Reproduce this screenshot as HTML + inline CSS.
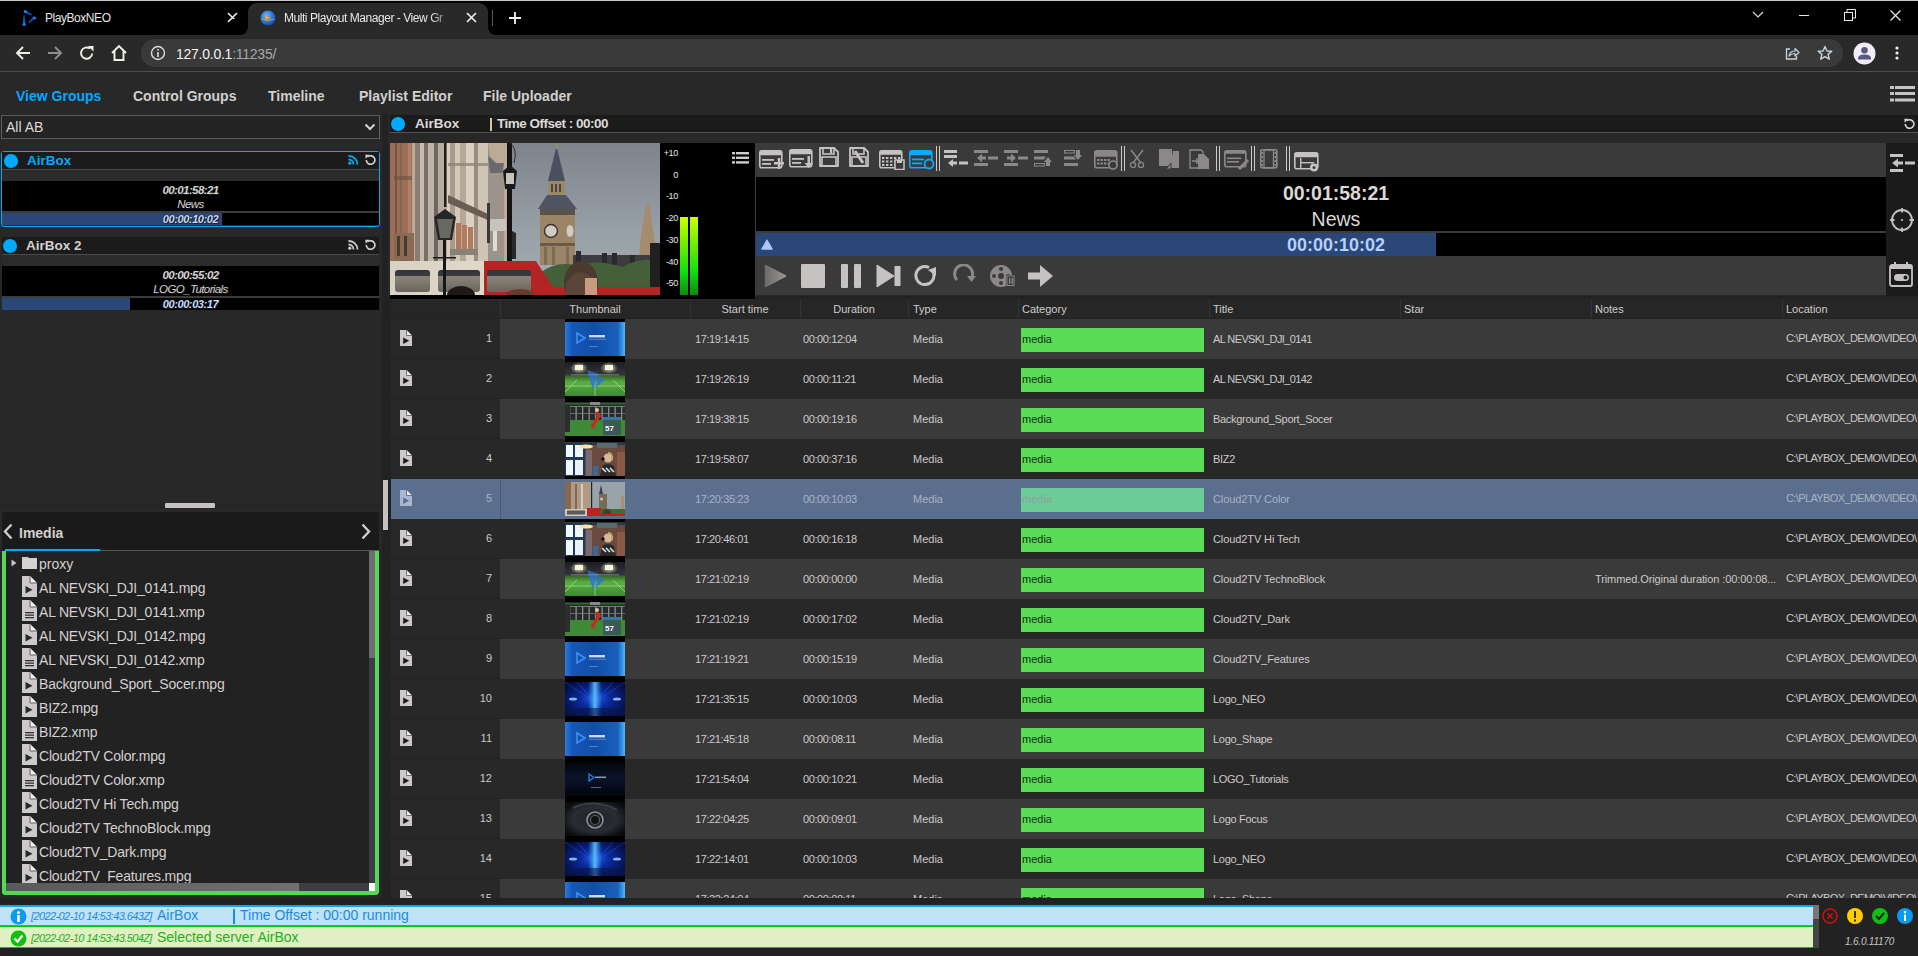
<!DOCTYPE html><html><head><meta charset="utf-8"><style>
html,body{margin:0;padding:0;width:1918px;height:956px;overflow:hidden;background:#282828;font-family:"Liberation Sans",sans-serif;}
div{box-sizing:border-box;}
.t{position:absolute;white-space:nowrap;}
</style></head><body>
<div style="position:absolute;left:0px;top:0px;width:1918px;height:1px;background:#c9c9c9"></div>
<div style="position:absolute;left:0px;top:1px;width:1918px;height:34px;background:#000"></div>
<svg style="position:absolute;left:21px;top:9px;" width="17" height="18" viewBox="0 0 17 18"><path d="M3.2 1.2 L11 5.2 L10.4 6.2 L3.2 3.6 Z" fill="#0e5cd0"/><circle cx="4.4" cy="2.4" r="1.5" fill="#1a80ff"/><path d="M14.4 8.4 L8.2 14.2 L7.4 13.4 L12.6 7.6 Z" fill="#0e5cd0"/><circle cx="13.5" cy="9.1" r="1.5" fill="#1a80ff"/><path d="M1.8 15.5 L2.6 6 L3.4 6 L4.4 15.5 Z" fill="#0e5cd0"/><circle cx="3.1" cy="15.5" r="1.5" fill="#1a80ff"/></svg>
<div style="position:absolute;left:45px;top:11px;white-space:nowrap;font-size:12px;line-height:15px;color:#e6e6e6;letter-spacing:-0.45px">PlayBoxNEO</div>
<svg style="position:absolute;left:227px;top:12px;" width="11" height="11" viewBox="0 0 11 11"><path d="M1 1 L10 10 M10 1 L1 10" stroke="#f0f0f0" stroke-width="1.6"/></svg>
<div style="position:absolute;left:248px;top:3px;width:240px;height:32px;background:#292929;border-radius:9px 9px 0 0"></div>
<div style="position:absolute;left:240px;top:27px;width:8px;height:8px;background:#292929"></div>
<div style="position:absolute;left:232px;top:19px;width:16px;height:16px;background:#000;border-radius:0 0 8px 0"></div>
<div style="position:absolute;left:488px;top:27px;width:8px;height:8px;background:#292929"></div>
<div style="position:absolute;left:488px;top:19px;width:16px;height:16px;background:#000;border-radius:0 0 0 8px"></div>
<svg style="position:absolute;left:260px;top:10px;" width="16" height="16" viewBox="0 0 16 16"><defs><radialGradient id="gb" cx="40%" cy="35%" r="65%"><stop offset="0" stop-color="#6ab8ff"/><stop offset="1" stop-color="#0c4fb8"/></radialGradient></defs><circle cx="8" cy="8" r="7.5" fill="url(#gb)"/><path d="M5 5 L11 8 L5 10 Z" fill="#f0a030"/><path d="M1.5 9 Q8 12 14.5 9" stroke="#f0a030" stroke-width="0.8" fill="none"/></svg>
<div style="position:absolute;left:284px;top:11px;white-space:nowrap;font-size:12px;line-height:15px;color:#e6e6e6;letter-spacing:-0.45px;width:172px;overflow:hidden;-webkit-mask-image:linear-gradient(90deg,#000 85%,transparent)">Multi Playout Manager - View Gr</div>
<svg style="position:absolute;left:466px;top:12px;" width="11" height="11" viewBox="0 0 11 11"><path d="M1 1 L10 10 M10 1 L1 10" stroke="#f0f0f0" stroke-width="1.6"/></svg>
<div style="position:absolute;left:492px;top:10px;width:1px;height:16px;background:#5a5a5a"></div>
<svg style="position:absolute;left:508px;top:11px;" width="14" height="14" viewBox="0 0 14 14"><path d="M7 1 V13 M1 7 H13" stroke="#f4f4f4" stroke-width="1.8"/></svg>
<svg style="position:absolute;left:1752px;top:11px;" width="12" height="8" viewBox="0 0 12 8"><path d="M1 1 L6 6 L11 1" fill="none" stroke="#e0e0e0" stroke-width="1.1"/></svg>
<div style="position:absolute;left:1799px;top:15px;width:10px;height:1px;background:#e8e8e8"></div>
<svg style="position:absolute;left:1844px;top:9px;" width="12" height="12" viewBox="0 0 12 12"><rect x="0.5" y="3.5" width="8" height="8" fill="none" stroke="#e8e8e8" stroke-width="1"/><path d="M3 3.5 V0.5 H11.5 V9 H8.5" fill="none" stroke="#e8e8e8" stroke-width="1"/></svg>
<svg style="position:absolute;left:1890px;top:10px;" width="11" height="11" viewBox="0 0 11 11"><path d="M0.5 0.5 L10.5 10.5 M10.5 0.5 L0.5 10.5" stroke="#ececec" stroke-width="1.2"/></svg>
<div style="position:absolute;left:0px;top:35px;width:1918px;height:36px;background:#292929"></div>
<div style="position:absolute;left:0px;top:71px;width:1918px;height:1px;background:#4e4e4e"></div>
<svg style="position:absolute;left:15px;top:45px;" width="16" height="16" viewBox="0 0 16 16"><path d="M15 8 H2.5 M8 2 L2 8 L8 14" fill="none" stroke="#f2efe6" stroke-width="1.9"/></svg>
<svg style="position:absolute;left:47px;top:45px;" width="16" height="16" viewBox="0 0 16 16"><path d="M1 8 H13.5 M8 2 L14 8 L8 14" fill="none" stroke="#8e8e8e" stroke-width="1.9"/></svg>
<svg style="position:absolute;left:79px;top:45px;" width="16" height="16" viewBox="0 0 16 16"><path d="M13.2 8.5 A5.6 5.6 0 1 1 11 3.6" fill="none" stroke="#f2efe6" stroke-width="1.9"/><path d="M9 1 H14.5 V6.5 Z" fill="#f2efe6"/></svg>
<svg style="position:absolute;left:110px;top:44px;" width="18" height="18" viewBox="0 0 18 18"><path d="M2 9 L9 2 L16 9 M4.5 7 V16 H13.5 V7" fill="none" stroke="#f2efe6" stroke-width="1.9" stroke-linejoin="miter"/></svg>
<div style="position:absolute;left:141px;top:39px;width:1702px;height:28px;background:#3a3a3a;border-radius:14px"></div>
<svg style="position:absolute;left:150px;top:45px;" width="16" height="16" viewBox="0 0 16 16"><circle cx="8" cy="8" r="6.5" fill="none" stroke="#d7dde4" stroke-width="1.4"/><rect x="7.2" y="7" width="1.6" height="5" fill="#d7dde4"/><rect x="7.2" y="4" width="1.6" height="1.6" fill="#d7dde4"/></svg>
<div style="position:absolute;left:176px;top:46px;white-space:nowrap;font-size:14px;line-height:16px;letter-spacing:-0.25px"><span style="color:#f2f2f2">127.0.0.1</span><span style="color:#a8a8a8">:11235/</span></div>
<svg style="position:absolute;left:1784px;top:45px;" width="16" height="16" viewBox="0 0 16 16"><path d="M6 4 H2.5 V14 H12.5 V11" fill="none" stroke="#c8d4dc" stroke-width="1.3"/><path d="M5 11 Q6 6 11 6 V3.5 L15 7.5 L11 11 V8.5 Q7.5 8.5 5 11 Z" fill="none" stroke="#c8d4dc" stroke-width="1.2" stroke-linejoin="round"/></svg>
<svg style="position:absolute;left:1817px;top:45px;" width="16" height="16" viewBox="0 0 16 16"><path d="M8 1.5 L10 6 L14.8 6.3 L11.1 9.4 L12.3 14.2 L8 11.6 L3.7 14.2 L4.9 9.4 L1.2 6.3 L6 6 Z" fill="none" stroke="#c8d4dc" stroke-width="1.4" stroke-linejoin="round"/></svg>
<svg style="position:absolute;left:1853px;top:42px;" width="23" height="23" viewBox="0 0 23 23"><circle cx="11.5" cy="11.5" r="11" fill="#f3ecf8"/><circle cx="11.5" cy="8.3" r="3.3" fill="#545a80"/><path d="M5 16.5 Q5 12.5 11.5 12.5 Q18 12.5 18 16.5 V17.5 H5 Z" fill="#545a80"/></svg>
<svg style="position:absolute;left:1894px;top:45px;" width="6" height="16" viewBox="0 0 6 16"><circle cx="3" cy="3" r="1.6" fill="#f0f0f0"/><circle cx="3" cy="8" r="1.6" fill="#f0f0f0"/><circle cx="3" cy="13" r="1.6" fill="#f0f0f0"/></svg>
<div style="position:absolute;left:16px;top:88px;white-space:nowrap;font-size:14px;line-height:17px;font-weight:bold;color:#00aaff">View Groups</div>
<div style="position:absolute;left:133px;top:88px;white-space:nowrap;font-size:14px;line-height:17px;font-weight:bold;color:#d2cfcf">Control Groups</div>
<div style="position:absolute;left:268px;top:88px;white-space:nowrap;font-size:14px;line-height:17px;font-weight:bold;color:#d2cfcf">Timeline</div>
<div style="position:absolute;left:359px;top:88px;white-space:nowrap;font-size:14px;line-height:17px;font-weight:bold;color:#d2cfcf">Playlist Editor</div>
<div style="position:absolute;left:483px;top:88px;white-space:nowrap;font-size:14px;line-height:17px;font-weight:bold;color:#d2cfcf">File Uploader</div>
<svg style="position:absolute;left:1890px;top:86px;" width="26" height="17" viewBox="0 0 26 17"><rect x="0" y="0" width="4" height="3" fill="#c8c4c4"/><rect x="5" y="0" width="20" height="3" fill="#c8c4c4"/><rect x="0" y="6" width="4" height="3" fill="#c8c4c4"/><rect x="5" y="6" width="20" height="3" fill="#c8c4c4"/><rect x="0" y="12.5" width="4" height="3" fill="#c8c4c4"/><rect x="5" y="12.5" width="20" height="3" fill="#c8c4c4"/></svg>
<div style="position:absolute;left:1px;top:115px;width:379px;height:24px;border:1px solid #5c5c5c;background:#242424"></div>
<div style="position:absolute;left:6px;top:119px;white-space:nowrap;font-size:14px;line-height:17px;color:#dcd8d8">All AB</div>
<svg style="position:absolute;left:364px;top:123px;" width="12" height="8" viewBox="0 0 12 8"><path d="M1.5 1.5 L6 6 L10.5 1.5" fill="none" stroke="#d8d4d4" stroke-width="2"/></svg>
<div style="position:absolute;left:1px;top:151px;width:379px;height:76px;border:1px solid #0aa8f0;border-radius:3px;background:#2a2a2a"></div>
<div style="position:absolute;left:2px;top:152px;width:377px;height:17px;background:#1b1b1b"></div>
<div style="position:absolute;left:2px;top:169px;width:377px;height:1px;background:#4a4a4a"></div>
<div style="position:absolute;left:2px;top:170px;width:377px;height:11px;background:#2b2b2b"></div>
<div style="position:absolute;left:2px;top:181px;width:377px;height:1px;background:#3a3a3a"></div>
<div style="position:absolute;left:2px;top:181px;width:377px;height:30px;background:#000"></div>
<div style="position:absolute;left:2px;top:211px;width:377px;height:2px;background:#3c3c3c"></div>
<div style="position:absolute;left:2px;top:213px;width:377px;height:12px;background:#000"></div>
<div style="position:absolute;left:2px;top:213px;width:220px;height:12px;background:#2a4778"></div>
<div style="position:absolute;left:4px;top:154px;width:14px;height:14px;border-radius:50%;background:#00aaff"></div>
<div style="position:absolute;left:27px;top:153px;white-space:nowrap;font-size:13.5px;line-height:16px;font-weight:bold;color:#00aaff">AirBox</div>
<svg style="position:absolute;left:348px;top:155px;" width="11" height="10" viewBox="0 0 11 10"><circle cx="1.8" cy="8.2" r="1.6" fill="#0aa8f0"/><path d="M0.5 4.5 A5 5 0 0 1 5.5 9.5" fill="none" stroke="#0aa8f0" stroke-width="1.8"/><path d="M0.5 1 A8.5 8.5 0 0 1 9.5 9.5" fill="none" stroke="#0aa8f0" stroke-width="1.8"/></svg>
<svg style="position:absolute;left:365px;top:154px;" width="11" height="11" viewBox="0 0 11 11"><path d="M3 2.6 A4.3 4.3 0 1 1 1.3 6" fill="none" stroke="#d8d4d4" stroke-width="1.6"/><path d="M0.3 0.8 L4.6 0.8 L0.8 4.8 Z" fill="#d8d4d4"/></svg>
<div class="t" style="left:2px;width:377px;text-align:center;top:183px;font-size:11.5px;line-height:14px;font-weight:bold;font-style:italic;color:#d6d2d2;letter-spacing:-0.6px;text-shadow:0 0 1px #000,1px 1px 1px #222">00:01:58:21</div>
<div class="t" style="left:2px;width:377px;text-align:center;top:197px;font-size:11.5px;line-height:14px;font-style:italic;color:#d6d2d2;letter-spacing:-0.6px;text-shadow:0 0 1px #000,1px 1px 1px #222">News</div>
<div class="t" style="left:2px;width:377px;text-align:center;top:212px;font-size:11px;line-height:14px;font-weight:bold;font-style:italic;color:#c8dcff;letter-spacing:-0.4px;text-shadow:0 0 1px #000,1px 1px 1px #222">00:00:10:02</div>
<div style="position:absolute;left:1px;top:236px;width:379px;height:1px;background:#262626"></div>
<div style="position:absolute;left:2px;top:237px;width:377px;height:17px;background:#1b1b1b"></div>
<div style="position:absolute;left:2px;top:254px;width:377px;height:1px;background:#4a4a4a"></div>
<div style="position:absolute;left:2px;top:255px;width:377px;height:11px;background:#2b2b2b"></div>
<div style="position:absolute;left:2px;top:266px;width:377px;height:1px;background:#3a3a3a"></div>
<div style="position:absolute;left:2px;top:266px;width:377px;height:30px;background:#000"></div>
<div style="position:absolute;left:2px;top:296px;width:377px;height:2px;background:#3c3c3c"></div>
<div style="position:absolute;left:2px;top:298px;width:377px;height:12px;background:#000"></div>
<div style="position:absolute;left:2px;top:298px;width:128px;height:12px;background:#2a4778"></div>
<div style="position:absolute;left:3px;top:239px;width:14px;height:14px;border-radius:50%;background:#00aaff"></div>
<div style="position:absolute;left:26px;top:238px;white-space:nowrap;font-size:13.5px;line-height:16px;font-weight:bold;color:#d4d0d0">AirBox 2</div>
<svg style="position:absolute;left:348px;top:240px;" width="11" height="10" viewBox="0 0 11 10"><circle cx="1.8" cy="8.2" r="1.6" fill="#cfcaca"/><path d="M0.5 4.5 A5 5 0 0 1 5.5 9.5" fill="none" stroke="#cfcaca" stroke-width="1.8"/><path d="M0.5 1 A8.5 8.5 0 0 1 9.5 9.5" fill="none" stroke="#cfcaca" stroke-width="1.8"/></svg>
<svg style="position:absolute;left:365px;top:239px;" width="11" height="11" viewBox="0 0 11 11"><path d="M3 2.6 A4.3 4.3 0 1 1 1.3 6" fill="none" stroke="#d8d4d4" stroke-width="1.6"/><path d="M0.3 0.8 L4.6 0.8 L0.8 4.8 Z" fill="#d8d4d4"/></svg>
<div class="t" style="left:2px;width:377px;text-align:center;top:268px;font-size:11.5px;line-height:14px;font-weight:bold;font-style:italic;color:#d6d2d2;letter-spacing:-0.6px;text-shadow:0 0 1px #000,1px 1px 1px #222">00:00:55:02</div>
<div class="t" style="left:2px;width:377px;text-align:center;top:282px;font-size:11.5px;line-height:14px;font-style:italic;color:#d6d2d2;letter-spacing:-0.6px;text-shadow:0 0 1px #000,1px 1px 1px #222">LOGO_Tutorials</div>
<div class="t" style="left:2px;width:377px;text-align:center;top:297px;font-size:11px;line-height:14px;font-weight:bold;font-style:italic;color:#c8dcff;letter-spacing:-0.4px;text-shadow:0 0 1px #000,1px 1px 1px #222">00:00:03:17</div>
<div style="position:absolute;left:0px;top:503px;width:380px;height:6px;background:#252525"></div>
<div style="position:absolute;left:165px;top:503px;width:50px;height:5px;background:#c6c2c2;border-radius:1px"></div>
<div style="position:absolute;left:2px;top:512px;width:377px;height:38px;background:#1a1a1a;border-radius:3px 3px 0 0"></div>
<svg style="position:absolute;left:3px;top:523px;" width="10" height="17" viewBox="0 0 10 17"><path d="M8.5 1.5 L2 8.5 L8.5 15.5" fill="none" stroke="#cfcbcb" stroke-width="2.4"/></svg>
<div style="position:absolute;left:19px;top:525px;white-space:nowrap;font-size:14px;line-height:17px;font-weight:bold;color:#d4d0d0">Imedia</div>
<svg style="position:absolute;left:361px;top:523px;" width="10" height="17" viewBox="0 0 10 17"><path d="M1.5 1.5 L8 8.5 L1.5 15.5" fill="none" stroke="#cfcbcb" stroke-width="2.4"/></svg>
<div style="position:absolute;left:5px;top:550px;width:374px;height:1px;background:#555"></div>
<div style="position:absolute;left:5px;top:549px;width:95px;height:2px;background:#0aa8f0"></div>
<div style="position:absolute;left:2px;top:551px;width:377px;height:344px;background:#222;border:4px solid #55d855;border-top:none;border-radius:0 0 4px 4px"></div>
<div style="position:absolute;left:369px;top:551px;width:6px;height:332px;background:#3d3d45"></div>
<div style="position:absolute;left:369px;top:551px;width:6px;height:107px;background:#6e6e6e"></div>
<div style="position:absolute;left:6px;top:883px;width:363px;height:8px;background:#3d3d45"></div>
<div style="position:absolute;left:6px;top:883px;width:293px;height:8px;background:linear-gradient(90deg,#5a5a5a,#707070)"></div>
<div style="position:absolute;left:369px;top:883px;width:6px;height:8px;background:#fff"></div>
<svg style="position:absolute;left:11px;top:559px;" width="6" height="8" viewBox="0 0 6 8"><path d="M0.5 0.5 L5.5 4 L0.5 7.5 Z" fill="#c8c4c4"/></svg>
<svg style="position:absolute;left:22px;top:556px;" width="16" height="14" viewBox="0 0 16 14"><path d="M0 1 H6 L7 2 H15 V13 H0 Z" fill="#cdc9c9"/><rect x="0" y="3" width="15" height="10" fill="#d6d2d2"/></svg>
<div style="position:absolute;left:39px;top:556px;white-space:nowrap;font-size:14px;line-height:17px;color:#d4d0d0">proxy</div>
<div style="position:absolute;left:6px;top:551px;width:363px;height:332px;overflow:hidden">
<svg style="position:absolute;left:16px;top:25px;" width="15" height="21" viewBox="0 0 15 21"><path d="M0 0 H8 L15 7 V21 H0 Z" fill="#cdc9c9"/><path d="M8 0 V7 H15" fill="#ece9e9" stroke="#555" stroke-width="0.9"/><path d="M3.5 10 L10.5 13.8 L3.5 17.6 Z" fill="#2a2a2a"/></svg>
<div style="position:absolute;left:33px;top:29px;white-space:nowrap;font-size:14px;line-height:17px;color:#d4d0d0;letter-spacing:-0.2px">AL NEVSKI_DJI_0141.mpg</div>
<svg style="position:absolute;left:16px;top:49px;" width="15" height="21" viewBox="0 0 15 21"><path d="M0 0 H8 L15 7 V21 H0 Z" fill="#cdc9c9"/><path d="M8 0 V7 H15" fill="#ece9e9" stroke="#555" stroke-width="0.9"/><rect x="3" y="12" width="9" height="1.3" fill="#333"/><rect x="3" y="14.5" width="9" height="1.3" fill="#333"/><rect x="3" y="17" width="9" height="1.3" fill="#333"/></svg>
<div style="position:absolute;left:33px;top:53px;white-space:nowrap;font-size:14px;line-height:17px;color:#d4d0d0;letter-spacing:-0.2px">AL NEVSKI_DJI_0141.xmp</div>
<svg style="position:absolute;left:16px;top:73px;" width="15" height="21" viewBox="0 0 15 21"><path d="M0 0 H8 L15 7 V21 H0 Z" fill="#cdc9c9"/><path d="M8 0 V7 H15" fill="#ece9e9" stroke="#555" stroke-width="0.9"/><path d="M3.5 10 L10.5 13.8 L3.5 17.6 Z" fill="#2a2a2a"/></svg>
<div style="position:absolute;left:33px;top:77px;white-space:nowrap;font-size:14px;line-height:17px;color:#d4d0d0;letter-spacing:-0.2px">AL NEVSKI_DJI_0142.mpg</div>
<svg style="position:absolute;left:16px;top:97px;" width="15" height="21" viewBox="0 0 15 21"><path d="M0 0 H8 L15 7 V21 H0 Z" fill="#cdc9c9"/><path d="M8 0 V7 H15" fill="#ece9e9" stroke="#555" stroke-width="0.9"/><rect x="3" y="12" width="9" height="1.3" fill="#333"/><rect x="3" y="14.5" width="9" height="1.3" fill="#333"/><rect x="3" y="17" width="9" height="1.3" fill="#333"/></svg>
<div style="position:absolute;left:33px;top:101px;white-space:nowrap;font-size:14px;line-height:17px;color:#d4d0d0;letter-spacing:-0.2px">AL NEVSKI_DJI_0142.xmp</div>
<svg style="position:absolute;left:16px;top:121px;" width="15" height="21" viewBox="0 0 15 21"><path d="M0 0 H8 L15 7 V21 H0 Z" fill="#cdc9c9"/><path d="M8 0 V7 H15" fill="#ece9e9" stroke="#555" stroke-width="0.9"/><path d="M3.5 10 L10.5 13.8 L3.5 17.6 Z" fill="#2a2a2a"/></svg>
<div style="position:absolute;left:33px;top:125px;white-space:nowrap;font-size:14px;line-height:17px;color:#d4d0d0;letter-spacing:-0.2px">Background_Sport_Socer.mpg</div>
<svg style="position:absolute;left:16px;top:145px;" width="15" height="21" viewBox="0 0 15 21"><path d="M0 0 H8 L15 7 V21 H0 Z" fill="#cdc9c9"/><path d="M8 0 V7 H15" fill="#ece9e9" stroke="#555" stroke-width="0.9"/><path d="M3.5 10 L10.5 13.8 L3.5 17.6 Z" fill="#2a2a2a"/></svg>
<div style="position:absolute;left:33px;top:149px;white-space:nowrap;font-size:14px;line-height:17px;color:#d4d0d0;letter-spacing:-0.2px">BIZ2.mpg</div>
<svg style="position:absolute;left:16px;top:169px;" width="15" height="21" viewBox="0 0 15 21"><path d="M0 0 H8 L15 7 V21 H0 Z" fill="#cdc9c9"/><path d="M8 0 V7 H15" fill="#ece9e9" stroke="#555" stroke-width="0.9"/><rect x="3" y="12" width="9" height="1.3" fill="#333"/><rect x="3" y="14.5" width="9" height="1.3" fill="#333"/><rect x="3" y="17" width="9" height="1.3" fill="#333"/></svg>
<div style="position:absolute;left:33px;top:173px;white-space:nowrap;font-size:14px;line-height:17px;color:#d4d0d0;letter-spacing:-0.2px">BIZ2.xmp</div>
<svg style="position:absolute;left:16px;top:193px;" width="15" height="21" viewBox="0 0 15 21"><path d="M0 0 H8 L15 7 V21 H0 Z" fill="#cdc9c9"/><path d="M8 0 V7 H15" fill="#ece9e9" stroke="#555" stroke-width="0.9"/><path d="M3.5 10 L10.5 13.8 L3.5 17.6 Z" fill="#2a2a2a"/></svg>
<div style="position:absolute;left:33px;top:197px;white-space:nowrap;font-size:14px;line-height:17px;color:#d4d0d0;letter-spacing:-0.2px">Cloud2TV Color.mpg</div>
<svg style="position:absolute;left:16px;top:217px;" width="15" height="21" viewBox="0 0 15 21"><path d="M0 0 H8 L15 7 V21 H0 Z" fill="#cdc9c9"/><path d="M8 0 V7 H15" fill="#ece9e9" stroke="#555" stroke-width="0.9"/><rect x="3" y="12" width="9" height="1.3" fill="#333"/><rect x="3" y="14.5" width="9" height="1.3" fill="#333"/><rect x="3" y="17" width="9" height="1.3" fill="#333"/></svg>
<div style="position:absolute;left:33px;top:221px;white-space:nowrap;font-size:14px;line-height:17px;color:#d4d0d0;letter-spacing:-0.2px">Cloud2TV Color.xmp</div>
<svg style="position:absolute;left:16px;top:241px;" width="15" height="21" viewBox="0 0 15 21"><path d="M0 0 H8 L15 7 V21 H0 Z" fill="#cdc9c9"/><path d="M8 0 V7 H15" fill="#ece9e9" stroke="#555" stroke-width="0.9"/><path d="M3.5 10 L10.5 13.8 L3.5 17.6 Z" fill="#2a2a2a"/></svg>
<div style="position:absolute;left:33px;top:245px;white-space:nowrap;font-size:14px;line-height:17px;color:#d4d0d0;letter-spacing:-0.2px">Cloud2TV Hi Tech.mpg</div>
<svg style="position:absolute;left:16px;top:265px;" width="15" height="21" viewBox="0 0 15 21"><path d="M0 0 H8 L15 7 V21 H0 Z" fill="#cdc9c9"/><path d="M8 0 V7 H15" fill="#ece9e9" stroke="#555" stroke-width="0.9"/><path d="M3.5 10 L10.5 13.8 L3.5 17.6 Z" fill="#2a2a2a"/></svg>
<div style="position:absolute;left:33px;top:269px;white-space:nowrap;font-size:14px;line-height:17px;color:#d4d0d0;letter-spacing:-0.2px">Cloud2TV TechnoBlock.mpg</div>
<svg style="position:absolute;left:16px;top:289px;" width="15" height="21" viewBox="0 0 15 21"><path d="M0 0 H8 L15 7 V21 H0 Z" fill="#cdc9c9"/><path d="M8 0 V7 H15" fill="#ece9e9" stroke="#555" stroke-width="0.9"/><path d="M3.5 10 L10.5 13.8 L3.5 17.6 Z" fill="#2a2a2a"/></svg>
<div style="position:absolute;left:33px;top:293px;white-space:nowrap;font-size:14px;line-height:17px;color:#d4d0d0;letter-spacing:-0.2px">Cloud2TV_Dark.mpg</div>
<svg style="position:absolute;left:16px;top:313px;" width="15" height="21" viewBox="0 0 15 21"><path d="M0 0 H8 L15 7 V21 H0 Z" fill="#cdc9c9"/><path d="M8 0 V7 H15" fill="#ece9e9" stroke="#555" stroke-width="0.9"/><path d="M3.5 10 L10.5 13.8 L3.5 17.6 Z" fill="#2a2a2a"/></svg>
<div style="position:absolute;left:33px;top:317px;white-space:nowrap;font-size:14px;line-height:17px;color:#d4d0d0;letter-spacing:-0.2px">Cloud2TV_Features.mpg</div>
</div>
<div style="position:absolute;left:382px;top:113px;width:6px;height:792px;background:#222"></div>
<div style="position:absolute;left:383px;top:480px;width:5px;height:50px;background:#c6c2c2"></div>
<div style="position:absolute;left:390px;top:115px;width:1528px;height:17px;background:#1b1b1b"></div>
<div style="position:absolute;left:390px;top:132px;width:1528px;height:1px;background:#555"></div>
<div style="position:absolute;left:391px;top:117px;width:14px;height:14px;border-radius:50%;background:#00aaff"></div>
<div style="position:absolute;left:415px;top:116px;white-space:nowrap;font-size:13.5px;line-height:16px;font-weight:bold;color:#dcd8d8">AirBox</div>
<div style="position:absolute;left:490px;top:118px;width:2px;height:13px;background:#d8c8a0"></div>
<div style="position:absolute;left:497px;top:116px;white-space:nowrap;font-size:13.5px;line-height:16px;font-weight:bold;color:#dcd8d8;letter-spacing:-0.5px">Time Offset : 00:00</div>
<svg style="position:absolute;left:1904px;top:118px;" width="11" height="11" viewBox="0 0 11 11"><path d="M3 2.6 A4.3 4.3 0 1 1 1.3 6" fill="none" stroke="#d8d4d4" stroke-width="1.6"/><path d="M0.3 0.8 L4.6 0.8 L0.8 4.8 Z" fill="#d8d4d4"/></svg>
<svg style="position:absolute;left:390px;top:143px;" width="270" height="152" viewBox="0 0 270 152">
<defs>
<linearGradient id="sky" x1="0" y1="0" x2="0" y2="1"><stop offset="0" stop-color="#7e848c"/><stop offset="0.6" stop-color="#98a0a8"/><stop offset="1" stop-color="#a8b0b4"/></linearGradient>
<linearGradient id="bus" x1="0" y1="0" x2="1" y2="0"><stop offset="0" stop-color="#d8d2c4"/><stop offset="1" stop-color="#e0d8c8"/></linearGradient>
<linearGradient id="win" x1="0" y1="0" x2="0" y2="1"><stop offset="0" stop-color="#303438"/><stop offset="0.25" stop-color="#3a3e42"/><stop offset="0.3" stop-color="#8a8478"/><stop offset="1" stop-color="#6a645c"/></linearGradient>
</defs>
<rect width="270" height="152" fill="url(#sky)"/>
<rect x="0" y="0" width="118" height="120" fill="#bcaa96"/>
<rect x="0" y="0" width="22" height="120" fill="#9a6e58"/>
<rect x="5" y="0" width="2" height="120" fill="#6a4a3a" opacity="0.7"/>
<rect x="10" y="0" width="1.5" height="120" fill="#7a5a48" opacity="0.7"/>
<rect x="18" y="0" width="3" height="120" fill="#b08068"/>
<rect x="4" y="33" width="18" height="4" fill="#6a5040" opacity="0.6"/>
<rect x="4" y="90" width="20" height="28" fill="#8a6a54"/>
<rect x="7" y="93" width="3" height="20" fill="#4a3a30"/><rect x="14" y="93" width="3" height="20" fill="#4a3a30"/>
<rect x="25" y="0" width="5" height="120" fill="#8a7e74"/>
<rect x="30" y="0" width="4" height="120" fill="#c8bcae"/>
<rect x="34" y="0" width="4" height="120" fill="#7a7068"/>
<rect x="38" y="0" width="6" height="120" fill="#c0b4a6"/>
<rect x="44" y="0" width="4" height="120" fill="#6e6660"/>
<rect x="48" y="0" width="6" height="120" fill="#b8aca0"/>
<rect x="54" y="0" width="2.5" height="64" fill="#1e1e1e"/>
<rect x="57" y="0" width="3" height="120" fill="#d8cebe"/>
<rect x="60" y="0" width="5" height="120" fill="#a89a8c"/>
<rect x="65" y="0" width="5" height="120" fill="#d4c8b8"/>
<rect x="70" y="0" width="6" height="120" fill="#b4a898"/>
<rect x="76" y="0" width="8" height="120" fill="#dcd0c0"/>
<rect x="84" y="0" width="4" height="120" fill="#9a8e82"/>
<rect x="88" y="0" width="10" height="120" fill="#d0c4b4"/>
<path d="M58 52 L100 72 L100 78 L58 60 Z" fill="#6a5e54"/>
<rect x="58" y="20" width="42" height="3" fill="#8a7e72" opacity="0.7"/>
<rect x="66" y="80" width="5" height="26" fill="#b07a5c"/><rect x="72" y="82" width="5" height="24" fill="#b47c5e"/><rect x="78" y="84" width="5" height="22" fill="#b07a5c"/>
<rect x="60" y="106" width="28" height="6" fill="#8a8078"/>
<path d="M98 0 L100 13 L106 20 L114 20 L114 120 L98 120 Z" fill="#9c948c"/>
<path d="M98 13 L106 20 L114 20 L112 30 L100 30 Z" fill="#6a6a6e"/>
<rect x="100" y="76" width="16" height="12" fill="#c8c4bc"/>
<rect x="103" y="88" width="4" height="20" fill="#e0dcd4"/>
<rect x="97" y="60" width="3" height="40" fill="#3a3a3a"/>
<rect x="117" y="0" width="5" height="120" fill="#141414"/>
<path d="M113 28 L120 22 L127 28 L125 46 H115 Z" fill="#1a1a1a"/>
<rect x="116" y="30" width="8" height="11" fill="#c8c4bc"/>
<path d="M120 0 Q128 6 124 20" stroke="#2a2a2a" stroke-width="1" fill="none"/>
<path d="M122 88 L126 90 L126 116 L122 116 Z" fill="#2a2a2a"/>
<path d="M166.5 3 L175 38 H158 Z" fill="#4a5060"/>
<rect x="166" y="0" width="1" height="6" fill="#a89060"/>
<rect x="158" y="38" width="17" height="14" fill="#9a8a64"/>
<rect x="161" y="41" width="2" height="8" fill="#4a4440"/><rect x="165" y="41" width="2" height="8" fill="#4a4440"/><rect x="169" y="41" width="2" height="8" fill="#4a4440"/>
<path d="M157 52 H176 L187 66 H148 Z" fill="#4e5462"/>
<rect x="150" y="66" width="35" height="56" fill="#9c8466"/>
<rect x="150" y="66" width="35" height="6" fill="#5a5248"/>
<rect x="150" y="100" width="35" height="3" fill="#6a5a48"/>
<rect x="154" y="104" width="3" height="18" fill="#6a5a48" opacity="0.6"/><rect x="162" y="104" width="3" height="18" fill="#6a5a48" opacity="0.6"/><rect x="176" y="104" width="3" height="18" fill="#6a5a48" opacity="0.6"/>
<circle cx="161" cy="88" r="6.5" fill="#d0ccc4" stroke="#3a3028" stroke-width="1.4"/>
<ellipse cx="180" cy="88" rx="3.5" ry="6" fill="#d0ccc4"/>
<path d="M256 60 L259 60 L265 100 L266 122 H249 L250 100 Z" fill="#a48c6c"/>
<rect x="183" y="112" width="87" height="12" fill="#3c3c40"/>
<rect x="186" y="108" width="5" height="12" fill="#2a2a2e"/><rect x="212" y="110" width="5" height="12" fill="#2a2a2e"/><rect x="222" y="110" width="5" height="12" fill="#2a2a2e"/><rect x="240" y="112" width="5" height="10" fill="#2a2a2e"/>
<path d="M150 130 Q165 118 185 122 Q210 116 232 124 Q255 112 270 120 V152 H150 Z" fill="#44603a"/>
<rect x="260" y="100" width="10" height="52" fill="#202020"/>
<rect x="0" y="118" width="94" height="34" fill="url(#bus)"/>
<rect x="5" y="127" width="35" height="22" rx="3" fill="url(#win)"/>
<rect x="48" y="127" width="42" height="22" rx="3" fill="url(#win)"/>
<path d="M94 118 H146 L168 152 H94 Z" fill="#b42424"/>
<rect x="97" y="127" width="44" height="22" rx="2" fill="url(#win)"/>
<rect x="150" y="144" width="120" height="8" fill="#b42424"/>
<rect x="53" y="83" width="3" height="69" fill="#161616"/>
<rect x="43" y="114" width="23" height="1.5" fill="#1a1a1a"/>
<path d="M44 74 L55 66 L66 74 L62 97 H48 Z" fill="#262628"/>
<path d="M47 76 H63 L60 95 H50 Z" fill="#6a6660"/>
<ellipse cx="71" cy="152" rx="14" ry="9" fill="#1e1816"/>
<ellipse cx="130" cy="152" rx="14" ry="6" fill="#6a3a2a"/>
<ellipse cx="191" cy="140" rx="17" ry="22" fill="#4a3a30"/>
<path d="M176 140 Q191 118 206 140 L206 152 H176 Z" fill="#5a4638"/>
<rect x="195" y="135" width="12" height="17" fill="#c89a80"/>
</svg>
<div style="position:absolute;left:660px;top:143px;width:95px;height:155px;background:#000"></div>
<div class="t" style="left:640px;width:38px;text-align:right;top:148.0px;font-size:9px;line-height:11px;color:#e6e6e6;letter-spacing:-0.3px">+10</div>
<div class="t" style="left:640px;width:38px;text-align:right;top:169.7px;font-size:9px;line-height:11px;color:#e6e6e6;letter-spacing:-0.3px">0</div>
<div class="t" style="left:640px;width:38px;text-align:right;top:191.4px;font-size:9px;line-height:11px;color:#e6e6e6;letter-spacing:-0.3px">-10</div>
<div class="t" style="left:640px;width:38px;text-align:right;top:213.1px;font-size:9px;line-height:11px;color:#e6e6e6;letter-spacing:-0.3px">-20</div>
<div class="t" style="left:640px;width:38px;text-align:right;top:234.8px;font-size:9px;line-height:11px;color:#e6e6e6;letter-spacing:-0.3px">-30</div>
<div class="t" style="left:640px;width:38px;text-align:right;top:256.5px;font-size:9px;line-height:11px;color:#e6e6e6;letter-spacing:-0.3px">-40</div>
<div class="t" style="left:640px;width:38px;text-align:right;top:278.2px;font-size:9px;line-height:11px;color:#e6e6e6;letter-spacing:-0.3px">-50</div>
<div style="position:absolute;left:680px;top:217px;width:8px;height:78px;background:linear-gradient(180deg,#ccff00 0%,#7cf000 30%,#10e010 70%,#0a8a10 100%)"></div>
<div style="position:absolute;left:690px;top:217px;width:8px;height:78px;background:linear-gradient(180deg,#ccff00 0%,#7cf000 30%,#10e010 70%,#0a8a10 100%)"></div>
<svg style="position:absolute;left:732px;top:152px;" width="17" height="12" viewBox="0 0 17 12"><rect x="0" y="0" width="3" height="2.4" fill="#d0cccc"/><rect x="4" y="0" width="13" height="2.4" fill="#d0cccc"/><rect x="0" y="4.6" width="3" height="2.4" fill="#d0cccc"/><rect x="4" y="4.6" width="13" height="2.4" fill="#d0cccc"/><rect x="0" y="9.2" width="3" height="2.4" fill="#d0cccc"/><rect x="4" y="9.2" width="13" height="2.4" fill="#d0cccc"/></svg>
<div style="position:absolute;left:755px;top:143px;width:1131px;height:152px;background:#3a3a3a"></div>
<div style="position:absolute;left:756px;top:177px;width:1130px;height:54px;background:#000"></div>
<div style="position:absolute;left:756px;top:231px;width:1130px;height:2px;background:#3c3c3c"></div>
<div style="position:absolute;left:756px;top:233px;width:1130px;height:23px;background:#000"></div>
<div style="position:absolute;left:756px;top:233px;width:680px;height:23px;background:#2a4778"></div>
<div style="position:absolute;left:756px;top:182px;white-space:nowrap;width:1160px;text-align:center;font-size:19.5px;line-height:22px;font-weight:bold;color:#dcd8d4">00:01:58:21</div>
<div style="position:absolute;left:756px;top:208px;white-space:nowrap;width:1160px;text-align:center;font-size:19.5px;line-height:22px;color:#dcd8d4">News</div>
<div style="position:absolute;left:756px;top:235px;white-space:nowrap;width:1160px;text-align:center;font-size:18px;line-height:21px;font-weight:bold;color:#b4d0ff">00:00:10:02</div>
<svg style="position:absolute;left:761px;top:239px;" width="12" height="11" viewBox="0 0 12 11"><path d="M6 0.8 L11.4 10.2 H0.6 Z" fill="#a8c8ff" stroke="#a8c8ff" stroke-width="1" stroke-linejoin="round"/></svg>
<svg style="position:absolute;left:759px;top:150px;" width="25" height="19" viewBox="0 0 25 19"><rect x="0.8" y="0.8" width="22" height="17" rx="2" fill="none" stroke="#c6c2c2" stroke-width="1.6"/><rect x="0.8" y="0.8" width="22" height="4.5" rx="1.5" fill="#c6c2c2"/><rect x="3" y="9" width="12" height="1.8" fill="#c6c2c2"/><rect x="3" y="13" width="9" height="1.8" fill="#c6c2c2"/><rect x="15" y="12" width="10" height="2.5" fill="#c6c2c2"/><rect x="18.8" y="8" width="2.5" height="11" fill="#c6c2c2"/></svg>
<svg style="position:absolute;left:789px;top:149px;" width="25" height="20" viewBox="0 0 25 20"><rect x="0.8" y="0.8" width="22" height="17" rx="2" fill="none" stroke="#c6c2c2" stroke-width="1.6"/><rect x="0.8" y="0.8" width="22" height="4.5" rx="1.5" fill="#c6c2c2"/><rect x="3" y="9" width="12" height="1.8" fill="#c6c2c2"/><rect x="3" y="13" width="9" height="1.8" fill="#c6c2c2"/><rect x="18.5" y="7" width="2.5" height="8" fill="#c6c2c2"/><path d="M15.5 14 H24 L19.75 19 Z" fill="#c6c2c2"/></svg>
<svg style="position:absolute;left:819px;top:147px;" width="20" height="20" viewBox="0 0 20 20"><path d="M1 1 H15 L19 5 V19 H1 Z" fill="none" stroke="#c6c2c2" stroke-width="1.8" stroke-linejoin="round"/><rect x="4" y="1" width="11" height="6" fill="none" stroke="#c6c2c2" stroke-width="1.6"/><rect x="11" y="2" width="2.2" height="4" fill="#c6c2c2"/><rect x="3" y="10" width="14" height="9" fill="none" stroke="#c6c2c2" stroke-width="1.6"/></svg>
<svg style="position:absolute;left:849px;top:147px;" width="20" height="20" viewBox="0 0 20 20"><path d="M1 1 H15 L19 5 V19 H1 Z" fill="none" stroke="#c6c2c2" stroke-width="1.8" stroke-linejoin="round"/><rect x="4" y="1" width="11" height="6" fill="none" stroke="#c6c2c2" stroke-width="1.6"/><rect x="3" y="10" width="14" height="9" fill="none" stroke="#c6c2c2" stroke-width="1.6"/><path d="M6 4 L14 16" stroke="#c6c2c2" stroke-width="3"/></svg>
<svg style="position:absolute;left:879px;top:150px;" width="26" height="20" viewBox="0 0 26 20"><rect x="0.8" y="0.8" width="22" height="17" rx="2" fill="none" stroke="#c6c2c2" stroke-width="1.6"/><rect x="0.8" y="0.8" width="22" height="4" rx="1.5" fill="#c6c2c2"/><rect x="3" y="7.0" width="2.4" height="2" fill="#c6c2c2"/><rect x="3" y="10.5" width="2.4" height="2" fill="#c6c2c2"/><rect x="3" y="14.0" width="2.4" height="2" fill="#c6c2c2"/><rect x="7" y="7.0" width="2.4" height="2" fill="#c6c2c2"/><rect x="7" y="10.5" width="2.4" height="2" fill="#c6c2c2"/><rect x="7" y="14.0" width="2.4" height="2" fill="#c6c2c2"/><rect x="11" y="7.0" width="2.4" height="2" fill="#c6c2c2"/><rect x="11" y="10.5" width="2.4" height="2" fill="#c6c2c2"/><rect x="11" y="14.0" width="2.4" height="2" fill="#c6c2c2"/><rect x="15" y="7.0" width="2.4" height="2" fill="#c6c2c2"/><rect x="15" y="10.5" width="2.4" height="2" fill="#c6c2c2"/><rect x="15" y="14.0" width="2.4" height="2" fill="#c6c2c2"/><rect x="19" y="7.0" width="2.4" height="2" fill="#c6c2c2"/><rect x="19" y="10.5" width="2.4" height="2" fill="#c6c2c2"/><rect x="19" y="14.0" width="2.4" height="2" fill="#c6c2c2"/><rect x="16" y="10" width="9" height="9.5" fill="#3a3a3a" stroke="#c6c2c2" stroke-width="1.5"/><rect x="18" y="10" width="5" height="3" fill="#c6c2c2"/></svg>
<svg style="position:absolute;left:909px;top:150px;" width="26" height="20" viewBox="0 0 26 20"><rect x="0.8" y="0.8" width="22" height="17" rx="2" fill="none" stroke="#0aaaff" stroke-width="1.6"/><rect x="0.8" y="0.8" width="22" height="4.5" rx="1.5" fill="#0aaaff"/><rect x="3" y="8.5" width="12" height="1.8" fill="#0aaaff"/><rect x="3" y="12.5" width="10" height="1.8" fill="#0aaaff"/><circle cx="20" cy="14" r="4.5" fill="#3a3a3a" stroke="#0aaaff" stroke-width="1.8"/></svg>
<div style="position:absolute;left:936px;top:146px;width:4px;height:25px;border-left:1.2px solid #cfcbcb;border-right:1.2px solid #cfcbcb"></div>
<svg style="position:absolute;left:944px;top:150px;" width="25" height="19" viewBox="0 0 25 19"><rect x="0" y="0" width="13" height="3" fill="#c6c2c2"/><rect x="0" y="5" width="13" height="3" fill="#c6c2c2"/><path d="M4 13 L9 9 V11.5 H13 V14.5 H9 V17 Z" fill="#c6c2c2"/><rect x="15" y="11.5" width="9" height="3" fill="#c6c2c2"/></svg>
<svg style="position:absolute;left:974px;top:150px;" width="25" height="18" viewBox="0 0 25 18"><rect x="0" y="0" width="14" height="3" fill="#8c8888"/><rect x="0" y="13" width="14" height="3" fill="#8c8888"/><path d="M3 8 L8 3.5 V6.5 H12 V9.5 H8 V12.5 Z" fill="#8c8888"/><rect x="14" y="6.5" width="10" height="3" fill="#8c8888"/></svg>
<svg style="position:absolute;left:1004px;top:150px;" width="25" height="18" viewBox="0 0 25 18"><rect x="0" y="0" width="14" height="3" fill="#8c8888"/><rect x="0" y="13" width="14" height="3" fill="#8c8888"/><path d="M12 8 L7 3.5 V6.5 H3 V9.5 H7 V12.5 Z" fill="#8c8888"/><rect x="14" y="6.5" width="10" height="3" fill="#8c8888"/></svg>
<svg style="position:absolute;left:1034px;top:150px;" width="19" height="18" viewBox="0 0 19 18"><rect x="0" y="0" width="14" height="3" fill="#8c8888"/><path d="M0 6.5 H12 L10 9.5 H0 Z" fill="#8c8888"/><rect x="0.5" y="13.5" width="10" height="2.5" fill="none" stroke="#8c8888" stroke-width="1"/><path d="M14 7 L18 12 H16 V16 H12 V12 H10 Z" fill="#8c8888"/></svg>
<svg style="position:absolute;left:1064px;top:150px;" width="19" height="18" viewBox="0 0 19 18"><rect x="0.5" y="0.5" width="10" height="2.5" fill="none" stroke="#8c8888" stroke-width="1"/><path d="M0 6.5 H10 L12 9.5 H0 Z" fill="#8c8888"/><rect x="0" y="13" width="14" height="3" fill="#8c8888"/><path d="M12 0 H16 V5 H18 L14 10 L10 5 H12 Z" fill="#8c8888"/></svg>
<svg style="position:absolute;left:1094px;top:150px;" width="26" height="20" viewBox="0 0 26 20"><rect x="0.8" y="0.8" width="22" height="17" rx="2" fill="none" stroke="#8c8888" stroke-width="1.6"/><rect x="0.8" y="0.8" width="22" height="6" rx="1.5" fill="#8c8888"/><rect x="3.0" y="9.0" width="2.4" height="2" fill="#8c8888"/><rect x="3.0" y="12.5" width="2.4" height="2" fill="#8c8888"/><rect x="6.5" y="9.0" width="2.4" height="2" fill="#8c8888"/><rect x="6.5" y="12.5" width="2.4" height="2" fill="#8c8888"/><rect x="10.0" y="9.0" width="2.4" height="2" fill="#8c8888"/><rect x="10.0" y="12.5" width="2.4" height="2" fill="#8c8888"/><rect x="13.5" y="9.0" width="2.4" height="2" fill="#8c8888"/><rect x="13.5" y="12.5" width="2.4" height="2" fill="#8c8888"/><circle cx="19" cy="15" r="4" fill="#3a3a3a" stroke="#8c8888" stroke-width="1.6"/></svg>
<div style="position:absolute;left:1121px;top:146px;width:4px;height:25px;border-left:1.2px solid #cfcbcb;border-right:1.2px solid #cfcbcb"></div>
<svg style="position:absolute;left:1129px;top:149px;" width="17" height="20" viewBox="0 0 17 20"><path d="M2 1 L12 14 M14 1 L4 14" stroke="#8c8888" stroke-width="1.4"/><circle cx="4" cy="16" r="2.6" fill="none" stroke="#8c8888" stroke-width="1.3"/><circle cx="12" cy="16" r="2.6" fill="none" stroke="#8c8888" stroke-width="1.3"/></svg>
<svg style="position:absolute;left:1159px;top:149px;" width="21" height="21" viewBox="0 0 21 21"><rect x="0" y="0" width="13" height="17" fill="#8c8888"/><path d="M14 2 H20 V19 H11 Z" fill="#8c8888"/><path d="M7 20 L12 14 L12 20 Z" fill="#8c8888" stroke="#3a3a3a" stroke-width="1"/></svg>
<svg style="position:absolute;left:1189px;top:149px;" width="21" height="21" viewBox="0 0 21 21"><path d="M1 1 H12 L14 3 V19 H1 Z" fill="none" stroke="#8c8888" stroke-width="1.3"/><path d="M9 5 H15 L20 10 V20 H9 Z" fill="#8c8888"/><path d="M3 12 H9 M7 9.5 L10 12 L7 14.5" stroke="#8c8888" stroke-width="1.4" fill="none"/></svg>
<div style="position:absolute;left:1216px;top:146px;width:4px;height:25px;border-left:1.2px solid #cfcbcb;border-right:1.2px solid #cfcbcb"></div>
<svg style="position:absolute;left:1224px;top:150px;" width="26" height="20" viewBox="0 0 26 20"><rect x="0.8" y="0.8" width="21" height="16" rx="2" fill="none" stroke="#8c8888" stroke-width="1.6"/><rect x="0.8" y="0.8" width="21" height="3" rx="1.5" fill="#8c8888"/><rect x="3" y="7.5" width="14" height="1.6" fill="#8c8888"/><rect x="3" y="11" width="12" height="1.6" fill="#8c8888"/><path d="M15 19 L24 10" stroke="#8c8888" stroke-width="3"/></svg>
<div style="position:absolute;left:1251px;top:146px;width:4px;height:25px;border-left:1.2px solid #cfcbcb;border-right:1.2px solid #cfcbcb"></div>
<svg style="position:absolute;left:1260px;top:149px;" width="18" height="20" viewBox="0 0 18 20"><rect x="0.8" y="0.8" width="16" height="18" rx="1" fill="none" stroke="#8c8888" stroke-width="1.6"/><rect x="4" y="1" width="9.5" height="18" fill="none" stroke="#8c8888" stroke-width="1.3"/><rect x="1.5" y="3" width="1.5" height="2" fill="#8c8888"/><rect x="14.5" y="3" width="1.5" height="2" fill="#8c8888"/><rect x="1.5" y="7" width="1.5" height="2" fill="#8c8888"/><rect x="14.5" y="7" width="1.5" height="2" fill="#8c8888"/><rect x="1.5" y="11" width="1.5" height="2" fill="#8c8888"/><rect x="14.5" y="11" width="1.5" height="2" fill="#8c8888"/><rect x="1.5" y="15" width="1.5" height="2" fill="#8c8888"/><rect x="14.5" y="15" width="1.5" height="2" fill="#8c8888"/></svg>
<div style="position:absolute;left:1286px;top:146px;width:4px;height:25px;border-left:1.2px solid #cfcbcb;border-right:1.2px solid #cfcbcb"></div>
<svg style="position:absolute;left:1294px;top:152px;" width="27" height="21" viewBox="0 0 27 21"><rect x="0.8" y="0.8" width="23" height="16" rx="2" fill="none" stroke="#c6c2c2" stroke-width="1.6"/><rect x="0.8" y="0.8" width="23" height="4.5" rx="1.5" fill="#c6c2c2"/><rect x="6" y="6" width="1.4" height="10" fill="#c6c2c2"/><rect x="6" y="10" width="14" height="1.4" fill="#c6c2c2"/><circle cx="20" cy="15.5" r="4" fill="#c6c2c2"/><circle cx="20" cy="15.5" r="1.5" fill="#3a3a3a"/></svg>
<svg style="position:absolute;left:764px;top:264px;" width="23" height="24" viewBox="0 0 23 24"><defs><linearGradient id="pg" x1="0" y1="0" x2="1" y2="0"><stop offset="0" stop-color="#6e6a6a"/><stop offset="1" stop-color="#9a9696"/></linearGradient></defs><path d="M1.5 1.5 L21.5 12 L1.5 22.5 Z" fill="url(#pg)" stroke="url(#pg)" stroke-width="1.5" stroke-linejoin="round"/></svg>
<div style="position:absolute;left:801px;top:264px;width:24px;height:24px;background:#c6c2c2;border-radius:1px"></div>
<div style="position:absolute;left:841px;top:264px;width:7px;height:24px;background:#c6c2c2;border-radius:1px"></div>
<div style="position:absolute;left:854px;top:264px;width:7px;height:24px;background:#c6c2c2;border-radius:1px"></div>
<svg style="position:absolute;left:876px;top:264px;" width="26" height="24" viewBox="0 0 26 24"><path d="M1 1 L18 12 L1 23 Z" fill="#c6c2c2" stroke="#c6c2c2" stroke-width="1" stroke-linejoin="round"/><rect x="18.5" y="2" width="6" height="20" fill="#c6c2c2"/></svg>
<svg style="position:absolute;left:914px;top:264px;" width="26" height="24" viewBox="0 0 26 24"><path d="M19.5 9 A9 9 0 1 1 15 3.6" fill="none" stroke="#c6c2c2" stroke-width="3"/><path d="M14 6 L22 3 L22 12 Z" fill="#c6c2c2"/></svg>
<svg style="position:absolute;left:952px;top:264px;" width="26" height="24" viewBox="0 0 26 24"><path d="M5 16 A9 9 0 1 1 20 13" fill="none" stroke="#8c8888" stroke-width="3"/><path d="M15 12 H24 L19.5 18 Z" fill="#8c8888"/></svg>
<svg style="position:absolute;left:990px;top:264px;" width="26" height="24" viewBox="0 0 26 24"><circle cx="11" cy="12" r="11" fill="#8c8888"/><circle cx="11" cy="5" r="2" fill="#3a3a3a"/><circle cx="11" cy="19" r="2" fill="#3a3a3a"/><circle cx="4" cy="12" r="2" fill="#3a3a3a"/><circle cx="18" cy="12" r="2" fill="#3a3a3a"/><circle cx="11" cy="12" r="3" fill="#3a3a3a"/><rect x="16" y="11" width="9" height="11" fill="#3a3a3a"/><rect x="17" y="12" width="7" height="9.5" fill="none" stroke="#8c8888" stroke-width="1"/><rect x="19" y="14" width="1.3" height="6" fill="#8c8888"/><rect x="21.5" y="14" width="1.3" height="6" fill="#8c8888"/></svg>
<svg style="position:absolute;left:1028px;top:264px;" width="26" height="24" viewBox="0 0 26 24"><path d="M0 8.5 H12 V1 L25 12 L12 23 V15.5 H0 Z" fill="#c6c2c2"/></svg>
<div style="position:absolute;left:1886px;top:143px;width:32px;height:153px;background:#1b1b1b"></div>
<svg style="position:absolute;left:1890px;top:154px;" width="25" height="19" viewBox="0 0 25 19"><rect x="0" y="0" width="13" height="3" fill="#c6c2c2"/><rect x="0" y="15" width="13" height="3" fill="#c6c2c2"/><path d="M2 9 L8 4.5 V7.5 H13 V10.5 H8 V13.5 Z" fill="#c6c2c2"/><rect x="15" y="7.5" width="10" height="3" fill="#c6c2c2"/></svg>
<svg style="position:absolute;left:1889px;top:207px;" width="26" height="26" viewBox="0 0 26 26"><circle cx="13" cy="13" r="10" fill="none" stroke="#c6c2c2" stroke-width="1.8"/><path d="M13 1 V5.5 M13 20.5 V25 M1 13 H5.5 M20.5 13 H25" stroke="#c6c2c2" stroke-width="1.8"/><circle cx="13" cy="13" r="1.1" fill="#c6c2c2"/></svg>
<svg style="position:absolute;left:1889px;top:262px;" width="25" height="26" viewBox="0 0 25 26"><rect x="1" y="3" width="22" height="21" rx="2" fill="none" stroke="#c6c2c2" stroke-width="1.8"/><rect x="1" y="3" width="22" height="4" fill="#c6c2c2"/><rect x="5" y="0" width="2" height="5" fill="#c6c2c2"/><rect x="17" y="0" width="2" height="5" fill="#c6c2c2"/><rect x="5" y="12" width="15" height="7" rx="3.5" fill="#c6c2c2"/><circle cx="16.5" cy="15.5" r="2" fill="#1b1b1b"/></svg>
<div style="position:absolute;left:388px;top:296px;width:1530px;height:609px;background:#222"></div>
<div style="position:absolute;left:391px;top:299px;width:1527px;height:19px;background:#262626"></div>
<div style="position:absolute;left:390px;top:295px;width:365px;height:4px;background:#000"></div>
<div style="position:absolute;left:500px;top:299px;width:1px;height:19px;background:#333"></div>
<div style="position:absolute;left:690px;top:299px;width:1px;height:19px;background:#333"></div>
<div style="position:absolute;left:800px;top:299px;width:1px;height:19px;background:#333"></div>
<div style="position:absolute;left:908px;top:299px;width:1px;height:19px;background:#333"></div>
<div style="position:absolute;left:1018px;top:299px;width:1px;height:19px;background:#333"></div>
<div style="position:absolute;left:1209px;top:299px;width:1px;height:19px;background:#333"></div>
<div style="position:absolute;left:1400px;top:299px;width:1px;height:19px;background:#333"></div>
<div style="position:absolute;left:1591px;top:299px;width:1px;height:19px;background:#333"></div>
<div style="position:absolute;left:1782px;top:299px;width:1px;height:19px;background:#333"></div>
<div style="position:absolute;left:565px;top:303px;white-space:nowrap;width:60px;text-align:center;font-size:11px;line-height:13px;color:#cfcbcb">Thumbnail</div>
<div style="position:absolute;left:690px;top:303px;white-space:nowrap;width:110px;text-align:center;font-size:11px;line-height:13px;color:#cfcbcb">Start time</div>
<div style="position:absolute;left:800px;top:303px;white-space:nowrap;width:108px;text-align:center;font-size:11px;line-height:13px;color:#cfcbcb">Duration</div>
<div style="position:absolute;left:913px;top:303px;white-space:nowrap;font-size:11px;line-height:13px;color:#cfcbcb">Type</div>
<div style="position:absolute;left:1022px;top:303px;white-space:nowrap;font-size:11px;line-height:13px;color:#cfcbcb">Category</div>
<div style="position:absolute;left:1213px;top:303px;white-space:nowrap;font-size:11px;line-height:13px;color:#cfcbcb">Title</div>
<div style="position:absolute;left:1404px;top:303px;white-space:nowrap;font-size:11px;line-height:13px;color:#cfcbcb">Star</div>
<div style="position:absolute;left:1595px;top:303px;white-space:nowrap;font-size:11px;line-height:13px;color:#cfcbcb">Notes</div>
<div style="position:absolute;left:1786px;top:303px;white-space:nowrap;font-size:11px;line-height:13px;color:#cfcbcb">Location</div>
<div style="position:absolute;left:391px;top:319px;width:1527px;height:579px;overflow:hidden">
<div style="position:absolute;left:0px;top:0px;width:109px;height:40px;background:#282828;border-bottom:1px solid #222"></div>
<div style="position:absolute;left:109px;top:0px;width:1418px;height:40px;background:#3a3a3a"></div>
<svg style="position:absolute;left:9px;top:11px;" width="12" height="16" viewBox="0 0 12 16"><path d="M0 0 H6.5 L12 5.5 V16 H0 Z" fill="#cdc9c9"/><path d="M6.5 0 V5.5 H12" fill="#e8e6e6" stroke="#6a6a6a" stroke-width="0.9"/><path d="M3.2 7.5 L9.2 10.7 L3.2 13.9 Z" fill="#1e1e1e"/></svg>
<div class="t" style="left:49px;width:52px;text-align:right;top:13px;font-size:11px;line-height:13px;color:#cdc9c9">1</div>
<div style="position:absolute;left:174px;top:0px;width:60px;height:40px;background:#000"></div>
<svg style="position:absolute;left:174px;top:3px;" width="60" height="34" viewBox="0 0 60 34"><defs><linearGradient id="ga" x1="0" y1="0" x2="1" y2="0"><stop offset="0" stop-color="#2a7ae0"/><stop offset="0.12" stop-color="#1656b8"/><stop offset="0.5" stop-color="#124ea8"/><stop offset="0.88" stop-color="#1a60c0"/><stop offset="1" stop-color="#50b8ff"/></linearGradient></defs><rect width="60" height="34" fill="url(#ga)"/><path d="M12 11 L20 16 L12 21 Z" fill="none" stroke="#3a90f0" stroke-width="1.6"/><rect x="24" y="13" width="16" height="2.4" fill="#e0eaff" opacity="0.9"/><rect x="24" y="16.8" width="17" height="0.9" fill="#7aa8e0" opacity="0.7"/><rect x="24" y="24" width="9" height="0.8" fill="#7aa8e0" opacity="0.7"/></svg>
<div style="position:absolute;left:304px;top:14px;white-space:nowrap;font-size:11px;line-height:13px;color:#cdc9c9;letter-spacing:-0.4px">17:19:14:15</div>
<div style="position:absolute;left:412px;top:14px;white-space:nowrap;font-size:11px;line-height:13px;color:#cdc9c9;letter-spacing:-0.4px">00:00:12:04</div>
<div style="position:absolute;left:522px;top:14px;white-space:nowrap;font-size:11px;line-height:13px;color:#cdc9c9">Media</div>
<div style="position:absolute;left:630px;top:9px;width:183px;height:24px;background:#58dd55"></div>
<div style="position:absolute;left:631px;top:14px;white-space:nowrap;font-size:11px;line-height:13px;color:#1a2a1a">media</div>
<div style="position:absolute;left:822px;top:14px;white-space:nowrap;font-size:11px;line-height:13px;color:#cdc9c9;letter-spacing:-0.6px">AL NEVSKI_DJI_0141</div>
<div style="position:absolute;left:1395px;top:13px;white-space:nowrap;font-size:11px;line-height:13px;color:#cdc9c9;letter-spacing:-0.62px">C:\PLAYBOX_DEMO\VIDEO\</div>
<div style="position:absolute;left:0px;top:40px;width:109px;height:40px;background:#282828;border-bottom:1px solid #222"></div>
<div style="position:absolute;left:109px;top:40px;width:1418px;height:40px;background:#282828"></div>
<svg style="position:absolute;left:9px;top:51px;" width="12" height="16" viewBox="0 0 12 16"><path d="M0 0 H6.5 L12 5.5 V16 H0 Z" fill="#cdc9c9"/><path d="M6.5 0 V5.5 H12" fill="#e8e6e6" stroke="#6a6a6a" stroke-width="0.9"/><path d="M3.2 7.5 L9.2 10.7 L3.2 13.9 Z" fill="#1e1e1e"/></svg>
<div class="t" style="left:49px;width:52px;text-align:right;top:53px;font-size:11px;line-height:13px;color:#cdc9c9">2</div>
<div style="position:absolute;left:174px;top:40px;width:60px;height:40px;background:#000"></div>
<svg style="position:absolute;left:174px;top:43px;" width="60" height="34" viewBox="0 0 60 34"><defs><linearGradient id="gbb" x1="0" y1="0" x2="0" y2="1"><stop offset="0" stop-color="#1a1c22"/><stop offset="0.38" stop-color="#34363a"/><stop offset="0.42" stop-color="#3a6a2a"/><stop offset="0.6" stop-color="#58b040"/><stop offset="1" stop-color="#3a8a30"/></linearGradient><radialGradient id="gl" cx="50%" cy="50%" r="50%"><stop offset="0" stop-color="#fff8d0" stop-opacity="0.9"/><stop offset="1" stop-color="#fff8d0" stop-opacity="0"/></radialGradient></defs><rect width="60" height="34" fill="url(#gbb)"/><ellipse cx="14" cy="6" rx="9" ry="6" fill="url(#gl)"/><ellipse cx="44" cy="6" rx="9" ry="6" fill="url(#gl)"/><rect x="10" y="3" width="8" height="5" fill="#f8f4d8"/><rect x="40" y="3" width="8" height="5" fill="#f8f4d8"/><path d="M0 30 L12 18 M60 30 L48 18 M30 34 L30 18 M0 24 H60" stroke="#c8e8c0" stroke-width="0.7" opacity="0.8"/><path d="M22 8 L34 12 L28 28 Z" fill="#2a70e0" opacity="0.75"/><path d="M34 14 L40 18 L30 26 Z" fill="#2a70e0" opacity="0.75"/><rect x="6" y="12" width="48" height="1.5" fill="#9a9a9a" opacity="0.5"/></svg>
<div style="position:absolute;left:304px;top:54px;white-space:nowrap;font-size:11px;line-height:13px;color:#cdc9c9;letter-spacing:-0.4px">17:19:26:19</div>
<div style="position:absolute;left:412px;top:54px;white-space:nowrap;font-size:11px;line-height:13px;color:#cdc9c9;letter-spacing:-0.4px">00:00:11:21</div>
<div style="position:absolute;left:522px;top:54px;white-space:nowrap;font-size:11px;line-height:13px;color:#cdc9c9">Media</div>
<div style="position:absolute;left:630px;top:49px;width:183px;height:24px;background:#58dd55"></div>
<div style="position:absolute;left:631px;top:54px;white-space:nowrap;font-size:11px;line-height:13px;color:#1a2a1a">media</div>
<div style="position:absolute;left:822px;top:54px;white-space:nowrap;font-size:11px;line-height:13px;color:#cdc9c9;letter-spacing:-0.6px">AL NEVSKI_DJI_0142</div>
<div style="position:absolute;left:1395px;top:53px;white-space:nowrap;font-size:11px;line-height:13px;color:#cdc9c9;letter-spacing:-0.62px">C:\PLAYBOX_DEMO\VIDEO\</div>
<div style="position:absolute;left:0px;top:80px;width:109px;height:40px;background:#282828;border-bottom:1px solid #222"></div>
<div style="position:absolute;left:109px;top:80px;width:1418px;height:40px;background:#3a3a3a"></div>
<svg style="position:absolute;left:9px;top:91px;" width="12" height="16" viewBox="0 0 12 16"><path d="M0 0 H6.5 L12 5.5 V16 H0 Z" fill="#cdc9c9"/><path d="M6.5 0 V5.5 H12" fill="#e8e6e6" stroke="#6a6a6a" stroke-width="0.9"/><path d="M3.2 7.5 L9.2 10.7 L3.2 13.9 Z" fill="#1e1e1e"/></svg>
<div class="t" style="left:49px;width:52px;text-align:right;top:93px;font-size:11px;line-height:13px;color:#cdc9c9">3</div>
<div style="position:absolute;left:174px;top:80px;width:60px;height:40px;background:#000"></div>
<svg style="position:absolute;left:174px;top:83px;" width="60" height="34" viewBox="0 0 60 34"><rect width="60" height="34" fill="#262a2c"/><rect x="4.0" y="4" width="1.3" height="14" fill="#8a8e8a"/><rect x="10.5" y="4" width="1.3" height="14" fill="#8a8e8a"/><rect x="17.0" y="4" width="1.3" height="14" fill="#8a8e8a"/><rect x="23.5" y="4" width="1.3" height="14" fill="#8a8e8a"/><rect x="30.0" y="4" width="1.3" height="14" fill="#8a8e8a"/><rect x="36.5" y="4" width="1.3" height="14" fill="#8a8e8a"/><rect x="43.0" y="4" width="1.3" height="14" fill="#8a8e8a"/><rect x="49.5" y="4" width="1.3" height="14" fill="#8a8e8a"/><rect x="56.0" y="4" width="1.3" height="14" fill="#8a8e8a"/><rect x="2" y="4" width="58" height="1" fill="#7a7e7a"/><rect x="2" y="11" width="58" height="0.8" fill="#7a7e7a"/><rect x="0" y="1" width="60" height="1.5" fill="#2a6a2a"/><rect x="25" y="0" width="10" height="3" fill="#888"/><rect x="0" y="18" width="60" height="16" fill="#3e8a36"/><path d="M31 10 L34 14 L30 20 L27 26" stroke="#c03020" stroke-width="3.5" fill="none"/><circle cx="32" cy="8" r="2" fill="#e0c0a0"/><rect x="38" y="15" width="18" height="18" fill="#3a5a5a"/><rect x="38" y="15" width="18" height="3" fill="#3a70c0"/><text x="40" y="29" font-size="8" font-weight="bold" fill="#fff" font-family="Liberation Sans">57</text><rect x="0" y="4" width="5" height="26" fill="#2a2e2e"/></svg>
<div style="position:absolute;left:304px;top:94px;white-space:nowrap;font-size:11px;line-height:13px;color:#cdc9c9;letter-spacing:-0.4px">17:19:38:15</div>
<div style="position:absolute;left:412px;top:94px;white-space:nowrap;font-size:11px;line-height:13px;color:#cdc9c9;letter-spacing:-0.4px">00:00:19:16</div>
<div style="position:absolute;left:522px;top:94px;white-space:nowrap;font-size:11px;line-height:13px;color:#cdc9c9">Media</div>
<div style="position:absolute;left:630px;top:89px;width:183px;height:24px;background:#58dd55"></div>
<div style="position:absolute;left:631px;top:94px;white-space:nowrap;font-size:11px;line-height:13px;color:#1a2a1a">media</div>
<div style="position:absolute;left:822px;top:94px;white-space:nowrap;font-size:11px;line-height:13px;color:#cdc9c9;letter-spacing:-0.3px">Background_Sport_Socer</div>
<div style="position:absolute;left:1395px;top:93px;white-space:nowrap;font-size:11px;line-height:13px;color:#cdc9c9;letter-spacing:-0.62px">C:\PLAYBOX_DEMO\VIDEO\</div>
<div style="position:absolute;left:0px;top:120px;width:109px;height:40px;background:#282828;border-bottom:1px solid #222"></div>
<div style="position:absolute;left:109px;top:120px;width:1418px;height:40px;background:#282828"></div>
<svg style="position:absolute;left:9px;top:131px;" width="12" height="16" viewBox="0 0 12 16"><path d="M0 0 H6.5 L12 5.5 V16 H0 Z" fill="#cdc9c9"/><path d="M6.5 0 V5.5 H12" fill="#e8e6e6" stroke="#6a6a6a" stroke-width="0.9"/><path d="M3.2 7.5 L9.2 10.7 L3.2 13.9 Z" fill="#1e1e1e"/></svg>
<div class="t" style="left:49px;width:52px;text-align:right;top:133px;font-size:11px;line-height:13px;color:#cdc9c9">4</div>
<div style="position:absolute;left:174px;top:120px;width:60px;height:40px;background:#000"></div>
<svg style="position:absolute;left:174px;top:123px;" width="60" height="34" viewBox="0 0 60 34"><rect width="60" height="34" fill="#6a4a3e"/><rect x="0" y="0" width="20" height="34" fill="#1e3a5a"/><rect x="1" y="2" width="7" height="13" fill="#f4f8fc"/><rect x="10" y="3" width="8" height="12" fill="#eef4fa"/><rect x="1" y="18" width="7" height="15" fill="#f0f6fa"/><rect x="10" y="18" width="8" height="15" fill="#e8f0f8"/><rect x="21" y="8" width="6" height="26" fill="#7a6a70"/><rect x="0" y="0" width="60" height="3" fill="#2a3a44"/><ellipse cx="21" cy="4.5" rx="7" ry="2" fill="#f0e4b0"/><rect x="32" y="1" width="20" height="5" fill="#5a6a6a"/><rect x="52" y="10" width="8" height="24" fill="#8a5a44"/><circle cx="43" cy="16" r="4.5" fill="#d8b898"/><path d="M43 11 Q48 11 47 18" stroke="#c8a060" stroke-width="2" fill="none"/><path d="M35 34 L37 24 Q43 20 49 24 L51 34 Z" fill="#2a2a2a"/><path d="M37 26 L41 30 M41 26 L45 30 M45 26 L49 30" stroke="#e8e8e8" stroke-width="1.5"/><rect x="28" y="24" width="5" height="10" fill="#3a6a9a"/><circle cx="38" cy="17" r="1.8" fill="#111"/></svg>
<div style="position:absolute;left:304px;top:134px;white-space:nowrap;font-size:11px;line-height:13px;color:#cdc9c9;letter-spacing:-0.4px">17:19:58:07</div>
<div style="position:absolute;left:412px;top:134px;white-space:nowrap;font-size:11px;line-height:13px;color:#cdc9c9;letter-spacing:-0.4px">00:00:37:16</div>
<div style="position:absolute;left:522px;top:134px;white-space:nowrap;font-size:11px;line-height:13px;color:#cdc9c9">Media</div>
<div style="position:absolute;left:630px;top:129px;width:183px;height:24px;background:#58dd55"></div>
<div style="position:absolute;left:631px;top:134px;white-space:nowrap;font-size:11px;line-height:13px;color:#1a2a1a">media</div>
<div style="position:absolute;left:822px;top:134px;white-space:nowrap;font-size:11px;line-height:13px;color:#cdc9c9;letter-spacing:-0.3px">BIZ2</div>
<div style="position:absolute;left:1395px;top:133px;white-space:nowrap;font-size:11px;line-height:13px;color:#cdc9c9;letter-spacing:-0.62px">C:\PLAYBOX_DEMO\VIDEO\</div>
<div style="position:absolute;left:0px;top:160px;width:1527px;height:40px;background:#5a6e8e"></div>
<div style="position:absolute;left:109px;top:160px;width:1px;height:40px;background:#4a5a76"></div>
<svg style="position:absolute;left:9px;top:171px;" width="12" height="16" viewBox="0 0 12 16"><path d="M0 0 H6.5 L12 5.5 V16 H0 Z" fill="#a8b8d0"/><path d="M6.5 0 V5.5 H12" fill="#e8e6e6" stroke="#6a6a6a" stroke-width="0.9"/><path d="M3.2 7.5 L9.2 10.7 L3.2 13.9 Z" fill="#5a6e8e"/></svg>
<div class="t" style="left:49px;width:52px;text-align:right;top:173px;font-size:11px;line-height:13px;color:#a8b4c4">5</div>
<div style="position:absolute;left:174px;top:160px;width:60px;height:40px;background:#5a6e8e"></div>
<svg style="position:absolute;left:174px;top:163px;" width="60" height="34" viewBox="0 0 60 34"><rect width="60" height="34" fill="#9aa2aa"/><rect x="0" y="0" width="25" height="27" fill="#b09a84"/><rect x="0" y="0" width="6" height="27" fill="#8a6850"/><rect x="10" y="2" width="2" height="25" fill="#7a6a5a"/><rect x="16" y="2" width="2" height="25" fill="#d8ccbc"/><rect x="26" y="0" width="1.2" height="27" fill="#222"/><path d="M36 3 L38 12 H34 Z" fill="#3a4050"/><rect x="34" y="12" width="8" height="16" fill="#7a6a58"/><circle cx="36.5" cy="17" r="1.5" fill="#c8c4bc"/><rect x="56" y="14" width="3" height="14" fill="#a89070"/><rect x="0" y="27" width="22" height="7" fill="#d0c8b8"/><rect x="2" y="28.5" width="18" height="4" fill="#5a5a58"/><rect x="22" y="26" width="14" height="8" fill="#c02020"/><rect x="36" y="27" width="24" height="5" fill="#3e6a36"/><circle cx="42" cy="31" r="4" fill="#4a3a30"/><rect x="36" y="32" width="24" height="2" fill="#c02020"/></svg>
<div style="position:absolute;left:304px;top:174px;white-space:nowrap;font-size:11px;line-height:13px;color:#a8b4c4;letter-spacing:-0.4px">17:20:35:23</div>
<div style="position:absolute;left:412px;top:174px;white-space:nowrap;font-size:11px;line-height:13px;color:#a8b4c4;letter-spacing:-0.4px">00:00:10:03</div>
<div style="position:absolute;left:522px;top:174px;white-space:nowrap;font-size:11px;line-height:13px;color:#a8b4c4">Media</div>
<div style="position:absolute;left:630px;top:169px;width:183px;height:24px;background:#6ccc98"></div>
<div style="position:absolute;left:631px;top:174px;white-space:nowrap;font-size:11px;line-height:13px;color:#8aa0a0">media</div>
<div style="position:absolute;left:822px;top:174px;white-space:nowrap;font-size:11px;line-height:13px;color:#a8b4c4;letter-spacing:-0.1px">Cloud2TV Color</div>
<div style="position:absolute;left:1395px;top:173px;white-space:nowrap;font-size:11px;line-height:13px;color:#a8b4c4;letter-spacing:-0.62px">C:\PLAYBOX_DEMO\VIDEO\</div>
<div style="position:absolute;left:0px;top:200px;width:109px;height:40px;background:#282828;border-bottom:1px solid #222"></div>
<div style="position:absolute;left:109px;top:200px;width:1418px;height:40px;background:#282828"></div>
<svg style="position:absolute;left:9px;top:211px;" width="12" height="16" viewBox="0 0 12 16"><path d="M0 0 H6.5 L12 5.5 V16 H0 Z" fill="#cdc9c9"/><path d="M6.5 0 V5.5 H12" fill="#e8e6e6" stroke="#6a6a6a" stroke-width="0.9"/><path d="M3.2 7.5 L9.2 10.7 L3.2 13.9 Z" fill="#1e1e1e"/></svg>
<div class="t" style="left:49px;width:52px;text-align:right;top:213px;font-size:11px;line-height:13px;color:#cdc9c9">6</div>
<div style="position:absolute;left:174px;top:200px;width:60px;height:40px;background:#000"></div>
<svg style="position:absolute;left:174px;top:203px;" width="60" height="34" viewBox="0 0 60 34"><rect width="60" height="34" fill="#6a4a3e"/><rect x="0" y="0" width="20" height="34" fill="#1e3a5a"/><rect x="1" y="2" width="7" height="13" fill="#f4f8fc"/><rect x="10" y="3" width="8" height="12" fill="#eef4fa"/><rect x="1" y="18" width="7" height="15" fill="#f0f6fa"/><rect x="10" y="18" width="8" height="15" fill="#e8f0f8"/><rect x="21" y="8" width="6" height="26" fill="#7a6a70"/><rect x="0" y="0" width="60" height="3" fill="#2a3a44"/><ellipse cx="21" cy="4.5" rx="7" ry="2" fill="#f0e4b0"/><rect x="32" y="1" width="20" height="5" fill="#5a6a6a"/><rect x="52" y="10" width="8" height="24" fill="#8a5a44"/><circle cx="43" cy="16" r="4.5" fill="#d8b898"/><path d="M43 11 Q48 11 47 18" stroke="#c8a060" stroke-width="2" fill="none"/><path d="M35 34 L37 24 Q43 20 49 24 L51 34 Z" fill="#2a2a2a"/><path d="M37 26 L41 30 M41 26 L45 30 M45 26 L49 30" stroke="#e8e8e8" stroke-width="1.5"/><rect x="28" y="24" width="5" height="10" fill="#3a6a9a"/><circle cx="38" cy="17" r="1.8" fill="#111"/></svg>
<div style="position:absolute;left:304px;top:214px;white-space:nowrap;font-size:11px;line-height:13px;color:#cdc9c9;letter-spacing:-0.4px">17:20:46:01</div>
<div style="position:absolute;left:412px;top:214px;white-space:nowrap;font-size:11px;line-height:13px;color:#cdc9c9;letter-spacing:-0.4px">00:00:16:18</div>
<div style="position:absolute;left:522px;top:214px;white-space:nowrap;font-size:11px;line-height:13px;color:#cdc9c9">Media</div>
<div style="position:absolute;left:630px;top:209px;width:183px;height:24px;background:#58dd55"></div>
<div style="position:absolute;left:631px;top:214px;white-space:nowrap;font-size:11px;line-height:13px;color:#1a2a1a">media</div>
<div style="position:absolute;left:822px;top:214px;white-space:nowrap;font-size:11px;line-height:13px;color:#cdc9c9;letter-spacing:-0.1px">Cloud2TV Hi Tech</div>
<div style="position:absolute;left:1395px;top:213px;white-space:nowrap;font-size:11px;line-height:13px;color:#cdc9c9;letter-spacing:-0.62px">C:\PLAYBOX_DEMO\VIDEO\</div>
<div style="position:absolute;left:0px;top:240px;width:109px;height:40px;background:#282828;border-bottom:1px solid #222"></div>
<div style="position:absolute;left:109px;top:240px;width:1418px;height:40px;background:#3a3a3a"></div>
<svg style="position:absolute;left:9px;top:251px;" width="12" height="16" viewBox="0 0 12 16"><path d="M0 0 H6.5 L12 5.5 V16 H0 Z" fill="#cdc9c9"/><path d="M6.5 0 V5.5 H12" fill="#e8e6e6" stroke="#6a6a6a" stroke-width="0.9"/><path d="M3.2 7.5 L9.2 10.7 L3.2 13.9 Z" fill="#1e1e1e"/></svg>
<div class="t" style="left:49px;width:52px;text-align:right;top:253px;font-size:11px;line-height:13px;color:#cdc9c9">7</div>
<div style="position:absolute;left:174px;top:240px;width:60px;height:40px;background:#000"></div>
<svg style="position:absolute;left:174px;top:243px;" width="60" height="34" viewBox="0 0 60 34"><defs><linearGradient id="gbb" x1="0" y1="0" x2="0" y2="1"><stop offset="0" stop-color="#1a1c22"/><stop offset="0.38" stop-color="#34363a"/><stop offset="0.42" stop-color="#3a6a2a"/><stop offset="0.6" stop-color="#58b040"/><stop offset="1" stop-color="#3a8a30"/></linearGradient><radialGradient id="gl" cx="50%" cy="50%" r="50%"><stop offset="0" stop-color="#fff8d0" stop-opacity="0.9"/><stop offset="1" stop-color="#fff8d0" stop-opacity="0"/></radialGradient></defs><rect width="60" height="34" fill="url(#gbb)"/><ellipse cx="14" cy="6" rx="9" ry="6" fill="url(#gl)"/><ellipse cx="44" cy="6" rx="9" ry="6" fill="url(#gl)"/><rect x="10" y="3" width="8" height="5" fill="#f8f4d8"/><rect x="40" y="3" width="8" height="5" fill="#f8f4d8"/><path d="M0 30 L12 18 M60 30 L48 18 M30 34 L30 18 M0 24 H60" stroke="#c8e8c0" stroke-width="0.7" opacity="0.8"/><path d="M22 8 L34 12 L28 28 Z" fill="#2a70e0" opacity="0.75"/><path d="M34 14 L40 18 L30 26 Z" fill="#2a70e0" opacity="0.75"/><rect x="6" y="12" width="48" height="1.5" fill="#9a9a9a" opacity="0.5"/></svg>
<div style="position:absolute;left:304px;top:254px;white-space:nowrap;font-size:11px;line-height:13px;color:#cdc9c9;letter-spacing:-0.4px">17:21:02:19</div>
<div style="position:absolute;left:412px;top:254px;white-space:nowrap;font-size:11px;line-height:13px;color:#cdc9c9;letter-spacing:-0.4px">00:00:00:00</div>
<div style="position:absolute;left:522px;top:254px;white-space:nowrap;font-size:11px;line-height:13px;color:#cdc9c9">Media</div>
<div style="position:absolute;left:630px;top:249px;width:183px;height:24px;background:#58dd55"></div>
<div style="position:absolute;left:631px;top:254px;white-space:nowrap;font-size:11px;line-height:13px;color:#1a2a1a">media</div>
<div style="position:absolute;left:822px;top:254px;white-space:nowrap;font-size:11px;line-height:13px;color:#cdc9c9;letter-spacing:-0.1px">Cloud2TV TechnoBlock</div>
<div style="position:absolute;left:1204px;top:254px;white-space:nowrap;font-size:11px;line-height:13px;color:#cdc9c9;letter-spacing:-0.1px">Trimmed.Original duration :00:00:08...</div>
<div style="position:absolute;left:1395px;top:253px;white-space:nowrap;font-size:11px;line-height:13px;color:#cdc9c9;letter-spacing:-0.62px">C:\PLAYBOX_DEMO\VIDEO\</div>
<div style="position:absolute;left:0px;top:280px;width:109px;height:40px;background:#282828;border-bottom:1px solid #222"></div>
<div style="position:absolute;left:109px;top:280px;width:1418px;height:40px;background:#282828"></div>
<svg style="position:absolute;left:9px;top:291px;" width="12" height="16" viewBox="0 0 12 16"><path d="M0 0 H6.5 L12 5.5 V16 H0 Z" fill="#cdc9c9"/><path d="M6.5 0 V5.5 H12" fill="#e8e6e6" stroke="#6a6a6a" stroke-width="0.9"/><path d="M3.2 7.5 L9.2 10.7 L3.2 13.9 Z" fill="#1e1e1e"/></svg>
<div class="t" style="left:49px;width:52px;text-align:right;top:293px;font-size:11px;line-height:13px;color:#cdc9c9">8</div>
<div style="position:absolute;left:174px;top:280px;width:60px;height:40px;background:#000"></div>
<svg style="position:absolute;left:174px;top:283px;" width="60" height="34" viewBox="0 0 60 34"><rect width="60" height="34" fill="#262a2c"/><rect x="4.0" y="4" width="1.3" height="14" fill="#8a8e8a"/><rect x="10.5" y="4" width="1.3" height="14" fill="#8a8e8a"/><rect x="17.0" y="4" width="1.3" height="14" fill="#8a8e8a"/><rect x="23.5" y="4" width="1.3" height="14" fill="#8a8e8a"/><rect x="30.0" y="4" width="1.3" height="14" fill="#8a8e8a"/><rect x="36.5" y="4" width="1.3" height="14" fill="#8a8e8a"/><rect x="43.0" y="4" width="1.3" height="14" fill="#8a8e8a"/><rect x="49.5" y="4" width="1.3" height="14" fill="#8a8e8a"/><rect x="56.0" y="4" width="1.3" height="14" fill="#8a8e8a"/><rect x="2" y="4" width="58" height="1" fill="#7a7e7a"/><rect x="2" y="11" width="58" height="0.8" fill="#7a7e7a"/><rect x="0" y="1" width="60" height="1.5" fill="#2a6a2a"/><rect x="25" y="0" width="10" height="3" fill="#888"/><rect x="0" y="18" width="60" height="16" fill="#3e8a36"/><path d="M31 10 L34 14 L30 20 L27 26" stroke="#c03020" stroke-width="3.5" fill="none"/><circle cx="32" cy="8" r="2" fill="#e0c0a0"/><rect x="38" y="15" width="18" height="18" fill="#3a5a5a"/><rect x="38" y="15" width="18" height="3" fill="#3a70c0"/><text x="40" y="29" font-size="8" font-weight="bold" fill="#fff" font-family="Liberation Sans">57</text><rect x="0" y="4" width="5" height="26" fill="#2a2e2e"/></svg>
<div style="position:absolute;left:304px;top:294px;white-space:nowrap;font-size:11px;line-height:13px;color:#cdc9c9;letter-spacing:-0.4px">17:21:02:19</div>
<div style="position:absolute;left:412px;top:294px;white-space:nowrap;font-size:11px;line-height:13px;color:#cdc9c9;letter-spacing:-0.4px">00:00:17:02</div>
<div style="position:absolute;left:522px;top:294px;white-space:nowrap;font-size:11px;line-height:13px;color:#cdc9c9">Media</div>
<div style="position:absolute;left:630px;top:289px;width:183px;height:24px;background:#58dd55"></div>
<div style="position:absolute;left:631px;top:294px;white-space:nowrap;font-size:11px;line-height:13px;color:#1a2a1a">media</div>
<div style="position:absolute;left:822px;top:294px;white-space:nowrap;font-size:11px;line-height:13px;color:#cdc9c9;letter-spacing:-0.1px">Cloud2TV_Dark</div>
<div style="position:absolute;left:1395px;top:293px;white-space:nowrap;font-size:11px;line-height:13px;color:#cdc9c9;letter-spacing:-0.62px">C:\PLAYBOX_DEMO\VIDEO\</div>
<div style="position:absolute;left:0px;top:320px;width:109px;height:40px;background:#282828;border-bottom:1px solid #222"></div>
<div style="position:absolute;left:109px;top:320px;width:1418px;height:40px;background:#3a3a3a"></div>
<svg style="position:absolute;left:9px;top:331px;" width="12" height="16" viewBox="0 0 12 16"><path d="M0 0 H6.5 L12 5.5 V16 H0 Z" fill="#cdc9c9"/><path d="M6.5 0 V5.5 H12" fill="#e8e6e6" stroke="#6a6a6a" stroke-width="0.9"/><path d="M3.2 7.5 L9.2 10.7 L3.2 13.9 Z" fill="#1e1e1e"/></svg>
<div class="t" style="left:49px;width:52px;text-align:right;top:333px;font-size:11px;line-height:13px;color:#cdc9c9">9</div>
<div style="position:absolute;left:174px;top:320px;width:60px;height:40px;background:#000"></div>
<svg style="position:absolute;left:174px;top:323px;" width="60" height="34" viewBox="0 0 60 34"><defs><linearGradient id="ga" x1="0" y1="0" x2="1" y2="0"><stop offset="0" stop-color="#2a7ae0"/><stop offset="0.12" stop-color="#1656b8"/><stop offset="0.5" stop-color="#124ea8"/><stop offset="0.88" stop-color="#1a60c0"/><stop offset="1" stop-color="#50b8ff"/></linearGradient></defs><rect width="60" height="34" fill="url(#ga)"/><path d="M12 11 L20 16 L12 21 Z" fill="none" stroke="#3a90f0" stroke-width="1.6"/><rect x="24" y="13" width="16" height="2.4" fill="#e0eaff" opacity="0.9"/><rect x="24" y="16.8" width="17" height="0.9" fill="#7aa8e0" opacity="0.7"/><rect x="24" y="24" width="9" height="0.8" fill="#7aa8e0" opacity="0.7"/></svg>
<div style="position:absolute;left:304px;top:334px;white-space:nowrap;font-size:11px;line-height:13px;color:#cdc9c9;letter-spacing:-0.4px">17:21:19:21</div>
<div style="position:absolute;left:412px;top:334px;white-space:nowrap;font-size:11px;line-height:13px;color:#cdc9c9;letter-spacing:-0.4px">00:00:15:19</div>
<div style="position:absolute;left:522px;top:334px;white-space:nowrap;font-size:11px;line-height:13px;color:#cdc9c9">Media</div>
<div style="position:absolute;left:630px;top:329px;width:183px;height:24px;background:#58dd55"></div>
<div style="position:absolute;left:631px;top:334px;white-space:nowrap;font-size:11px;line-height:13px;color:#1a2a1a">media</div>
<div style="position:absolute;left:822px;top:334px;white-space:nowrap;font-size:11px;line-height:13px;color:#cdc9c9;letter-spacing:-0.1px">Cloud2TV_Features</div>
<div style="position:absolute;left:1395px;top:333px;white-space:nowrap;font-size:11px;line-height:13px;color:#cdc9c9;letter-spacing:-0.62px">C:\PLAYBOX_DEMO\VIDEO\</div>
<div style="position:absolute;left:0px;top:360px;width:109px;height:40px;background:#282828;border-bottom:1px solid #222"></div>
<div style="position:absolute;left:109px;top:360px;width:1418px;height:40px;background:#282828"></div>
<svg style="position:absolute;left:9px;top:371px;" width="12" height="16" viewBox="0 0 12 16"><path d="M0 0 H6.5 L12 5.5 V16 H0 Z" fill="#cdc9c9"/><path d="M6.5 0 V5.5 H12" fill="#e8e6e6" stroke="#6a6a6a" stroke-width="0.9"/><path d="M3.2 7.5 L9.2 10.7 L3.2 13.9 Z" fill="#1e1e1e"/></svg>
<div class="t" style="left:49px;width:52px;text-align:right;top:373px;font-size:11px;line-height:13px;color:#cdc9c9">10</div>
<div style="position:absolute;left:174px;top:360px;width:60px;height:40px;background:#000"></div>
<svg style="position:absolute;left:174px;top:363px;" width="60" height="34" viewBox="0 0 60 34"><defs><radialGradient id="gf" cx="50%" cy="50%" r="60%"><stop offset="0" stop-color="#2060e0"/><stop offset="0.4" stop-color="#0a2aa0"/><stop offset="1" stop-color="#040c40"/></radialGradient><linearGradient id="gfc" x1="0" y1="0" x2="1" y2="0"><stop offset="0" stop-color="#40a0ff" stop-opacity="0"/><stop offset="0.5" stop-color="#60c8ff" stop-opacity="0.9"/><stop offset="1" stop-color="#40a0ff" stop-opacity="0"/></linearGradient></defs><rect width="60" height="34" fill="url(#gf)"/><rect x="23" y="0" width="14" height="34" fill="url(#gfc)"/><ellipse cx="8" cy="17" rx="4" ry="1.5" fill="#a0d8ff" opacity="0.8"/><ellipse cx="52" cy="17" rx="4" ry="1.5" fill="#a0d8ff" opacity="0.8"/><path d="M0 0 L25 17 M60 0 L35 17 M12 0 L27 17 M48 0 L33 17" stroke="#4080ff" stroke-width="0.6" opacity="0.5"/><rect x="0" y="26" width="60" height="8" fill="#081850" opacity="0.6"/></svg>
<div style="position:absolute;left:304px;top:374px;white-space:nowrap;font-size:11px;line-height:13px;color:#cdc9c9;letter-spacing:-0.4px">17:21:35:15</div>
<div style="position:absolute;left:412px;top:374px;white-space:nowrap;font-size:11px;line-height:13px;color:#cdc9c9;letter-spacing:-0.4px">00:00:10:03</div>
<div style="position:absolute;left:522px;top:374px;white-space:nowrap;font-size:11px;line-height:13px;color:#cdc9c9">Media</div>
<div style="position:absolute;left:630px;top:369px;width:183px;height:24px;background:#58dd55"></div>
<div style="position:absolute;left:631px;top:374px;white-space:nowrap;font-size:11px;line-height:13px;color:#1a2a1a">media</div>
<div style="position:absolute;left:822px;top:374px;white-space:nowrap;font-size:11px;line-height:13px;color:#cdc9c9;letter-spacing:-0.3px">Logo_NEO</div>
<div style="position:absolute;left:1395px;top:373px;white-space:nowrap;font-size:11px;line-height:13px;color:#cdc9c9;letter-spacing:-0.62px">C:\PLAYBOX_DEMO\VIDEO\</div>
<div style="position:absolute;left:0px;top:400px;width:109px;height:40px;background:#282828;border-bottom:1px solid #222"></div>
<div style="position:absolute;left:109px;top:400px;width:1418px;height:40px;background:#3a3a3a"></div>
<svg style="position:absolute;left:9px;top:411px;" width="12" height="16" viewBox="0 0 12 16"><path d="M0 0 H6.5 L12 5.5 V16 H0 Z" fill="#cdc9c9"/><path d="M6.5 0 V5.5 H12" fill="#e8e6e6" stroke="#6a6a6a" stroke-width="0.9"/><path d="M3.2 7.5 L9.2 10.7 L3.2 13.9 Z" fill="#1e1e1e"/></svg>
<div class="t" style="left:49px;width:52px;text-align:right;top:413px;font-size:11px;line-height:13px;color:#cdc9c9">11</div>
<div style="position:absolute;left:174px;top:400px;width:60px;height:40px;background:#000"></div>
<svg style="position:absolute;left:174px;top:403px;" width="60" height="34" viewBox="0 0 60 34"><defs><linearGradient id="ga" x1="0" y1="0" x2="1" y2="0"><stop offset="0" stop-color="#2a7ae0"/><stop offset="0.12" stop-color="#1656b8"/><stop offset="0.5" stop-color="#124ea8"/><stop offset="0.88" stop-color="#1a60c0"/><stop offset="1" stop-color="#50b8ff"/></linearGradient></defs><rect width="60" height="34" fill="url(#ga)"/><path d="M12 11 L20 16 L12 21 Z" fill="none" stroke="#3a90f0" stroke-width="1.6"/><rect x="24" y="13" width="16" height="2.4" fill="#e0eaff" opacity="0.9"/><rect x="24" y="16.8" width="17" height="0.9" fill="#7aa8e0" opacity="0.7"/><rect x="24" y="24" width="9" height="0.8" fill="#7aa8e0" opacity="0.7"/></svg>
<div style="position:absolute;left:304px;top:414px;white-space:nowrap;font-size:11px;line-height:13px;color:#cdc9c9;letter-spacing:-0.4px">17:21:45:18</div>
<div style="position:absolute;left:412px;top:414px;white-space:nowrap;font-size:11px;line-height:13px;color:#cdc9c9;letter-spacing:-0.4px">00:00:08:11</div>
<div style="position:absolute;left:522px;top:414px;white-space:nowrap;font-size:11px;line-height:13px;color:#cdc9c9">Media</div>
<div style="position:absolute;left:630px;top:409px;width:183px;height:24px;background:#58dd55"></div>
<div style="position:absolute;left:631px;top:414px;white-space:nowrap;font-size:11px;line-height:13px;color:#1a2a1a">media</div>
<div style="position:absolute;left:822px;top:414px;white-space:nowrap;font-size:11px;line-height:13px;color:#cdc9c9;letter-spacing:-0.3px">Logo_Shape</div>
<div style="position:absolute;left:1395px;top:413px;white-space:nowrap;font-size:11px;line-height:13px;color:#cdc9c9;letter-spacing:-0.62px">C:\PLAYBOX_DEMO\VIDEO\</div>
<div style="position:absolute;left:0px;top:440px;width:109px;height:40px;background:#282828;border-bottom:1px solid #222"></div>
<div style="position:absolute;left:109px;top:440px;width:1418px;height:40px;background:#282828"></div>
<svg style="position:absolute;left:9px;top:451px;" width="12" height="16" viewBox="0 0 12 16"><path d="M0 0 H6.5 L12 5.5 V16 H0 Z" fill="#cdc9c9"/><path d="M6.5 0 V5.5 H12" fill="#e8e6e6" stroke="#6a6a6a" stroke-width="0.9"/><path d="M3.2 7.5 L9.2 10.7 L3.2 13.9 Z" fill="#1e1e1e"/></svg>
<div class="t" style="left:49px;width:52px;text-align:right;top:453px;font-size:11px;line-height:13px;color:#cdc9c9">12</div>
<div style="position:absolute;left:174px;top:440px;width:60px;height:40px;background:#000"></div>
<svg style="position:absolute;left:174px;top:443px;" width="60" height="34" viewBox="0 0 60 34"><defs><linearGradient id="gg" x1="0" y1="0" x2="0" y2="1"><stop offset="0" stop-color="#03050a"/><stop offset="0.45" stop-color="#0a1228"/><stop offset="0.55" stop-color="#0a1228"/><stop offset="1" stop-color="#03050a"/></linearGradient></defs><rect width="60" height="34" fill="url(#gg)"/><path d="M24 12 L29 15.5 L24 19 Z" fill="none" stroke="#2a80e0" stroke-width="1.3"/><rect x="30" y="14.5" width="11" height="1.6" fill="#8a96b0"/><rect x="26" y="25" width="10" height="0.9" fill="#6a7080"/></svg>
<div style="position:absolute;left:304px;top:454px;white-space:nowrap;font-size:11px;line-height:13px;color:#cdc9c9;letter-spacing:-0.4px">17:21:54:04</div>
<div style="position:absolute;left:412px;top:454px;white-space:nowrap;font-size:11px;line-height:13px;color:#cdc9c9;letter-spacing:-0.4px">00:00:10:21</div>
<div style="position:absolute;left:522px;top:454px;white-space:nowrap;font-size:11px;line-height:13px;color:#cdc9c9">Media</div>
<div style="position:absolute;left:630px;top:449px;width:183px;height:24px;background:#58dd55"></div>
<div style="position:absolute;left:631px;top:454px;white-space:nowrap;font-size:11px;line-height:13px;color:#1a2a1a">media</div>
<div style="position:absolute;left:822px;top:454px;white-space:nowrap;font-size:11px;line-height:13px;color:#cdc9c9;letter-spacing:-0.3px">LOGO_Tutorials</div>
<div style="position:absolute;left:1395px;top:453px;white-space:nowrap;font-size:11px;line-height:13px;color:#cdc9c9;letter-spacing:-0.62px">C:\PLAYBOX_DEMO\VIDEO\</div>
<div style="position:absolute;left:0px;top:480px;width:109px;height:40px;background:#282828;border-bottom:1px solid #222"></div>
<div style="position:absolute;left:109px;top:480px;width:1418px;height:40px;background:#3a3a3a"></div>
<svg style="position:absolute;left:9px;top:491px;" width="12" height="16" viewBox="0 0 12 16"><path d="M0 0 H6.5 L12 5.5 V16 H0 Z" fill="#cdc9c9"/><path d="M6.5 0 V5.5 H12" fill="#e8e6e6" stroke="#6a6a6a" stroke-width="0.9"/><path d="M3.2 7.5 L9.2 10.7 L3.2 13.9 Z" fill="#1e1e1e"/></svg>
<div class="t" style="left:49px;width:52px;text-align:right;top:493px;font-size:11px;line-height:13px;color:#cdc9c9">13</div>
<div style="position:absolute;left:174px;top:480px;width:60px;height:40px;background:#000"></div>
<svg style="position:absolute;left:174px;top:483px;" width="60" height="34" viewBox="0 0 60 34"><defs><radialGradient id="gh" cx="50%" cy="50%" r="60%"><stop offset="0" stop-color="#1a1c20"/><stop offset="0.6" stop-color="#2a2e34"/><stop offset="1" stop-color="#0a0c0e"/></radialGradient></defs><rect width="60" height="34" fill="url(#gh)"/><circle cx="30" cy="18" r="8" fill="none" stroke="#8a9096" stroke-width="1.6"/><circle cx="30" cy="18" r="4.5" fill="#0e1012" stroke="#5a5e62" stroke-width="1.2"/><path d="M8 6 Q30 -4 52 8" stroke="#3a3e44" stroke-width="2" fill="none"/></svg>
<div style="position:absolute;left:304px;top:494px;white-space:nowrap;font-size:11px;line-height:13px;color:#cdc9c9;letter-spacing:-0.4px">17:22:04:25</div>
<div style="position:absolute;left:412px;top:494px;white-space:nowrap;font-size:11px;line-height:13px;color:#cdc9c9;letter-spacing:-0.4px">00:00:09:01</div>
<div style="position:absolute;left:522px;top:494px;white-space:nowrap;font-size:11px;line-height:13px;color:#cdc9c9">Media</div>
<div style="position:absolute;left:630px;top:489px;width:183px;height:24px;background:#58dd55"></div>
<div style="position:absolute;left:631px;top:494px;white-space:nowrap;font-size:11px;line-height:13px;color:#1a2a1a">media</div>
<div style="position:absolute;left:822px;top:494px;white-space:nowrap;font-size:11px;line-height:13px;color:#cdc9c9;letter-spacing:-0.3px">Logo Focus</div>
<div style="position:absolute;left:1395px;top:493px;white-space:nowrap;font-size:11px;line-height:13px;color:#cdc9c9;letter-spacing:-0.62px">C:\PLAYBOX_DEMO\VIDEO\</div>
<div style="position:absolute;left:0px;top:520px;width:109px;height:40px;background:#282828;border-bottom:1px solid #222"></div>
<div style="position:absolute;left:109px;top:520px;width:1418px;height:40px;background:#282828"></div>
<svg style="position:absolute;left:9px;top:531px;" width="12" height="16" viewBox="0 0 12 16"><path d="M0 0 H6.5 L12 5.5 V16 H0 Z" fill="#cdc9c9"/><path d="M6.5 0 V5.5 H12" fill="#e8e6e6" stroke="#6a6a6a" stroke-width="0.9"/><path d="M3.2 7.5 L9.2 10.7 L3.2 13.9 Z" fill="#1e1e1e"/></svg>
<div class="t" style="left:49px;width:52px;text-align:right;top:533px;font-size:11px;line-height:13px;color:#cdc9c9">14</div>
<div style="position:absolute;left:174px;top:520px;width:60px;height:40px;background:#000"></div>
<svg style="position:absolute;left:174px;top:523px;" width="60" height="34" viewBox="0 0 60 34"><defs><radialGradient id="gf" cx="50%" cy="50%" r="60%"><stop offset="0" stop-color="#2060e0"/><stop offset="0.4" stop-color="#0a2aa0"/><stop offset="1" stop-color="#040c40"/></radialGradient><linearGradient id="gfc" x1="0" y1="0" x2="1" y2="0"><stop offset="0" stop-color="#40a0ff" stop-opacity="0"/><stop offset="0.5" stop-color="#60c8ff" stop-opacity="0.9"/><stop offset="1" stop-color="#40a0ff" stop-opacity="0"/></linearGradient></defs><rect width="60" height="34" fill="url(#gf)"/><rect x="23" y="0" width="14" height="34" fill="url(#gfc)"/><ellipse cx="8" cy="17" rx="4" ry="1.5" fill="#a0d8ff" opacity="0.8"/><ellipse cx="52" cy="17" rx="4" ry="1.5" fill="#a0d8ff" opacity="0.8"/><path d="M0 0 L25 17 M60 0 L35 17 M12 0 L27 17 M48 0 L33 17" stroke="#4080ff" stroke-width="0.6" opacity="0.5"/><rect x="0" y="26" width="60" height="8" fill="#081850" opacity="0.6"/></svg>
<div style="position:absolute;left:304px;top:534px;white-space:nowrap;font-size:11px;line-height:13px;color:#cdc9c9;letter-spacing:-0.4px">17:22:14:01</div>
<div style="position:absolute;left:412px;top:534px;white-space:nowrap;font-size:11px;line-height:13px;color:#cdc9c9;letter-spacing:-0.4px">00:00:10:03</div>
<div style="position:absolute;left:522px;top:534px;white-space:nowrap;font-size:11px;line-height:13px;color:#cdc9c9">Media</div>
<div style="position:absolute;left:630px;top:529px;width:183px;height:24px;background:#58dd55"></div>
<div style="position:absolute;left:631px;top:534px;white-space:nowrap;font-size:11px;line-height:13px;color:#1a2a1a">media</div>
<div style="position:absolute;left:822px;top:534px;white-space:nowrap;font-size:11px;line-height:13px;color:#cdc9c9;letter-spacing:-0.3px">Logo_NEO</div>
<div style="position:absolute;left:1395px;top:533px;white-space:nowrap;font-size:11px;line-height:13px;color:#cdc9c9;letter-spacing:-0.62px">C:\PLAYBOX_DEMO\VIDEO\</div>
<div style="position:absolute;left:0px;top:560px;width:109px;height:40px;background:#282828;border-bottom:1px solid #222"></div>
<div style="position:absolute;left:109px;top:560px;width:1418px;height:40px;background:#3a3a3a"></div>
<svg style="position:absolute;left:9px;top:571px;" width="12" height="16" viewBox="0 0 12 16"><path d="M0 0 H6.5 L12 5.5 V16 H0 Z" fill="#cdc9c9"/><path d="M6.5 0 V5.5 H12" fill="#e8e6e6" stroke="#6a6a6a" stroke-width="0.9"/><path d="M3.2 7.5 L9.2 10.7 L3.2 13.9 Z" fill="#1e1e1e"/></svg>
<div class="t" style="left:49px;width:52px;text-align:right;top:573px;font-size:11px;line-height:13px;color:#cdc9c9">15</div>
<div style="position:absolute;left:174px;top:560px;width:60px;height:40px;background:#000"></div>
<svg style="position:absolute;left:174px;top:563px;" width="60" height="34" viewBox="0 0 60 34"><defs><linearGradient id="ga" x1="0" y1="0" x2="1" y2="0"><stop offset="0" stop-color="#2a7ae0"/><stop offset="0.12" stop-color="#1656b8"/><stop offset="0.5" stop-color="#124ea8"/><stop offset="0.88" stop-color="#1a60c0"/><stop offset="1" stop-color="#50b8ff"/></linearGradient></defs><rect width="60" height="34" fill="url(#ga)"/><path d="M12 11 L20 16 L12 21 Z" fill="none" stroke="#3a90f0" stroke-width="1.6"/><rect x="24" y="13" width="16" height="2.4" fill="#e0eaff" opacity="0.9"/><rect x="24" y="16.8" width="17" height="0.9" fill="#7aa8e0" opacity="0.7"/><rect x="24" y="24" width="9" height="0.8" fill="#7aa8e0" opacity="0.7"/></svg>
<div style="position:absolute;left:304px;top:574px;white-space:nowrap;font-size:11px;line-height:13px;color:#cdc9c9;letter-spacing:-0.4px">17:22:24:04</div>
<div style="position:absolute;left:412px;top:574px;white-space:nowrap;font-size:11px;line-height:13px;color:#cdc9c9;letter-spacing:-0.4px">00:00:08:11</div>
<div style="position:absolute;left:522px;top:574px;white-space:nowrap;font-size:11px;line-height:13px;color:#cdc9c9">Media</div>
<div style="position:absolute;left:630px;top:569px;width:183px;height:24px;background:#58dd55"></div>
<div style="position:absolute;left:631px;top:574px;white-space:nowrap;font-size:11px;line-height:13px;color:#1a2a1a">media</div>
<div style="position:absolute;left:822px;top:574px;white-space:nowrap;font-size:11px;line-height:13px;color:#cdc9c9;letter-spacing:-0.3px">Logo_Shape</div>
<div style="position:absolute;left:1395px;top:573px;white-space:nowrap;font-size:11px;line-height:13px;color:#cdc9c9;letter-spacing:-0.62px">C:\PLAYBOX_DEMO\VIDEO\</div>
</div>
<div style="position:absolute;left:0px;top:898px;width:1918px;height:7px;background:#222"></div>
<div style="position:absolute;left:0px;top:905px;width:1813px;height:21px;background:#bfe3f7;border-top:2px solid #0aa8f0;border-bottom:1px solid #0aa8f0"></div>
<div style="position:absolute;left:0px;top:926px;width:1813px;height:22px;background:#e0f0c2;border-top:1px solid #10c010;border-bottom:1px solid #10c010"></div>
<div style="position:absolute;left:0px;top:948px;width:1918px;height:8px;background:#222"></div>
<div style="position:absolute;left:1813px;top:905px;width:105px;height:51px;background:#222"></div>
<div style="position:absolute;left:1813px;top:905px;width:6px;height:43px;background:#444"></div>
<div style="position:absolute;left:1813px;top:905px;width:6px;height:14px;background:#777"></div>
<svg style="position:absolute;left:10px;top:908px;" width="17" height="17" viewBox="0 0 17 17"><circle cx="8.5" cy="8.5" r="8" fill="#0a9af0"/><rect x="7.2" y="7" width="2.6" height="7" fill="#fff"/><circle cx="8.5" cy="4.5" r="1.5" fill="#fff"/></svg>
<div style="position:absolute;left:31px;top:910px;white-space:nowrap;font-size:11px;line-height:13px;font-style:italic;color:#1a8ae8;letter-spacing:-0.6px">[2022-02-10 14:53:43.643Z]</div>
<div style="position:absolute;left:157px;top:907px;white-space:nowrap;font-size:14px;line-height:17px;color:#1a8ae8">AirBox</div>
<div style="position:absolute;left:233px;top:909px;width:2px;height:15px;background:#1a8ae8"></div>
<div style="position:absolute;left:240px;top:907px;white-space:nowrap;font-size:14px;line-height:17px;color:#1a8ae8">Time Offset : 00:00 running</div>
<svg style="position:absolute;left:10px;top:930px;" width="17" height="17" viewBox="0 0 17 17"><circle cx="8.5" cy="8.5" r="8" fill="#10c010"/><path d="M4.5 8.5 L7.5 11.5 L12.5 5.5" fill="none" stroke="#fff" stroke-width="2.2"/></svg>
<div style="position:absolute;left:31px;top:932px;white-space:nowrap;font-size:11px;line-height:13px;font-style:italic;color:#20b020;letter-spacing:-0.6px">[2022-02-10 14:53:43.504Z]</div>
<div style="position:absolute;left:157px;top:929px;white-space:nowrap;font-size:14px;line-height:17px;color:#20b020">Selected server AirBox</div>
<svg style="position:absolute;left:1822px;top:908px;" width="16" height="16" viewBox="0 0 16 16"><circle cx="8" cy="8" r="7" fill="none" stroke="#d01010" stroke-width="1.5"/><path d="M5.5 5.5 L10.5 10.5 M10.5 5.5 L5.5 10.5" stroke="#d01010" stroke-width="1.6"/></svg>
<svg style="position:absolute;left:1847px;top:908px;" width="16" height="16" viewBox="0 0 16 16"><circle cx="8" cy="8" r="8" fill="#ffcc00"/><rect x="7" y="3" width="2" height="7" fill="#333"/><rect x="7" y="11.5" width="2" height="2" fill="#333"/></svg>
<svg style="position:absolute;left:1872px;top:908px;" width="16" height="16" viewBox="0 0 16 16"><circle cx="8" cy="8" r="8" fill="#10c010"/><path d="M4 8 L7 11 L12 5" fill="none" stroke="#222" stroke-width="2"/></svg>
<svg style="position:absolute;left:1897px;top:908px;" width="16" height="16" viewBox="0 0 16 16"><circle cx="8" cy="8" r="8" fill="#0a9af0"/><rect x="7" y="6.5" width="2" height="6.5" fill="#fff"/><circle cx="8" cy="4" r="1.3" fill="#fff"/></svg>
<div style="position:absolute;left:1845px;top:936px;white-space:nowrap;font-size:10px;line-height:12px;font-style:italic;color:#c8c4c4;letter-spacing:-0.2px">1.6.0.11170</div>
</body></html>
